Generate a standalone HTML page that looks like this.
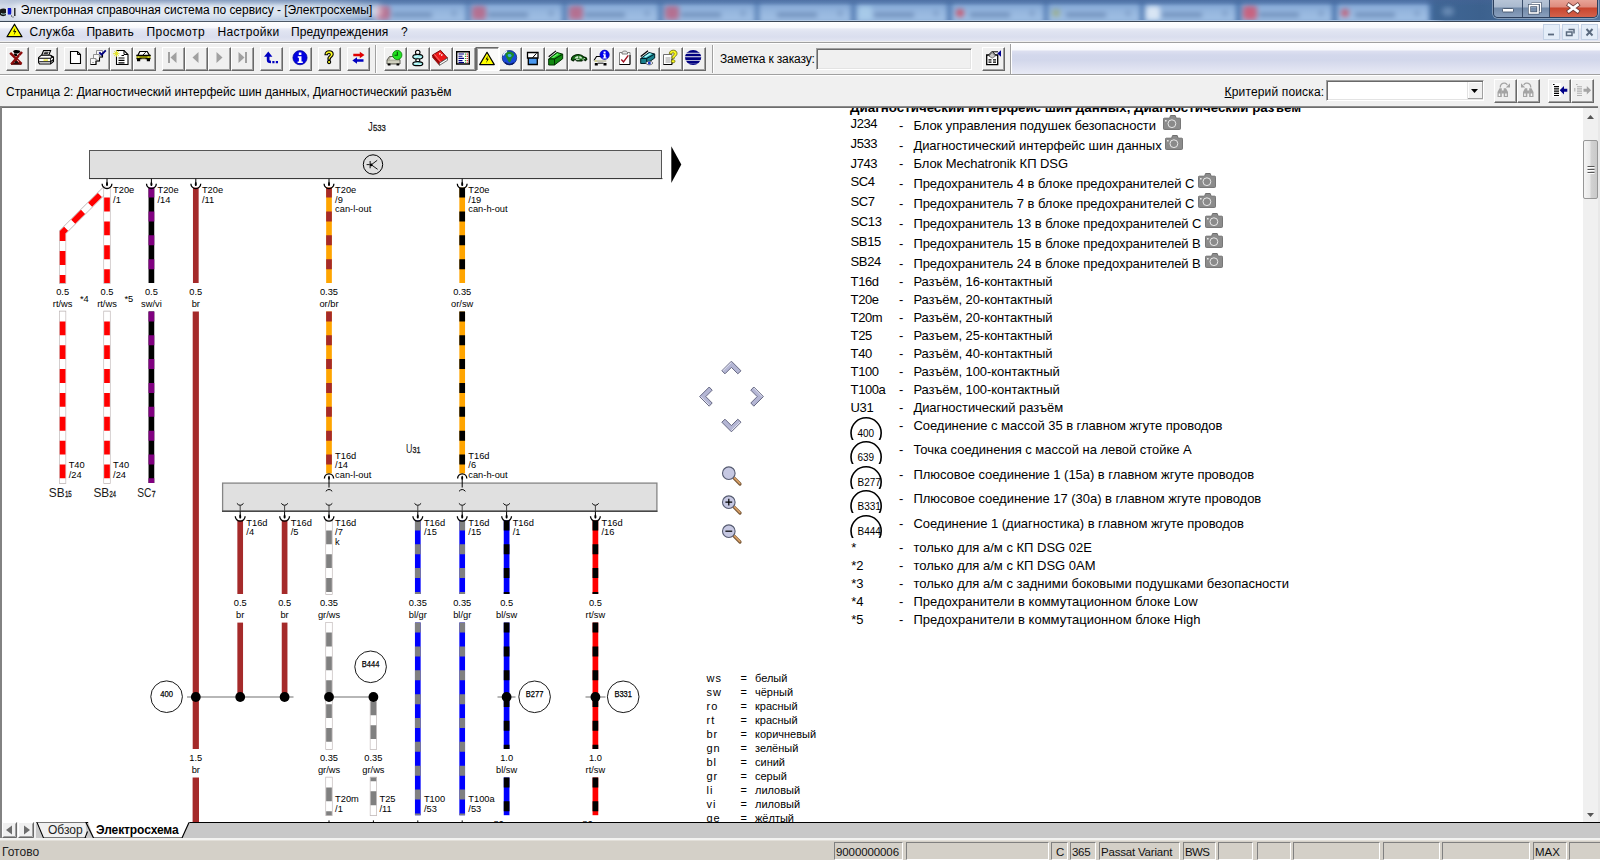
<!DOCTYPE html>
<html lang="ru"><head><meta charset="utf-8"><title>Электронная справочная система по сервису - [Электросхемы]</title>
<style>
html,body{margin:0;padding:0;}
body{width:1600px;height:860px;overflow:hidden;position:relative;background:#fff;font-family:"Liberation Sans",sans-serif;font-size:12px;color:#000;}
.a{position:absolute;}
.t{position:absolute;white-space:nowrap;line-height:1;}
#titlebar{left:0;top:0;width:1600px;height:21px;overflow:hidden;background:linear-gradient(to right,#d3dbe8 0,#cfd9e8 60px,#c4d2e6 150px,#b4c7e0 260px,#9ab4d6 330px,#5d84b9 372px,#4c76ae 1425px,#3f6695 1436px,#3c618e 1480px,#50759f 1600px);}
#menubar{left:0;top:22px;width:1600px;height:19px;background:linear-gradient(to bottom,#ffffff 0,#f7f8fc 5.5px,#e6e9f4 7px,#dfe3f1 10px,#dadeee 15px,#e2e5f2 19px);}
#toolrow{left:0;top:43px;width:1600px;height:31px;background:#f0f0f0;}
#toolgrad{left:1012px;top:43px;width:588px;height:31px;background:linear-gradient(to bottom,#ffffff 0,#f8f9fc 6.5px,#dcdff0 8.5px,#d3d8ec 12px,#d2d7eb 17px,#dde0f0 24px,#e8eaf5 31px);}
#infobar{left:0;top:76px;width:1600px;height:30px;background:#f0f0f0;}
.btn{position:absolute;width:23px;height:24px;box-sizing:border-box;background:#f0f0f0;border-top:1px solid #fff;border-left:1px solid #fff;border-right:1px solid #696969;border-bottom:1px solid #696969;box-shadow:inset -1px -1px 0 #a0a0a0;}
.btn.p{background:#fafafa;border-top:1px solid #696969;border-left:1px solid #696969;border-right:1px solid #fff;border-bottom:1px solid #fff;box-shadow:inset 1px 1px 0 #a0a0a0;}
.btn svg{position:absolute;left:2px;top:3px;}
.sunk{position:absolute;box-sizing:border-box;border-top:1px solid #a0a0a0;border-left:1px solid #a0a0a0;border-right:1px solid #fff;border-bottom:1px solid #fff;box-shadow:inset 1px 1px 0 #696969,inset -1px -1px 0 #e3e3e3;}
.sp{position:absolute;box-sizing:border-box;height:18px;top:842px;border-top:1px solid #808080;border-left:1px solid #808080;border-right:1px solid #fff;border-bottom:1px solid #fff;font-size:11.5px;line-height:18px;padding-left:1px;white-space:nowrap;overflow:hidden;color:#111;}
</style></head><body>
<!-- ===== title bar ===== -->
<div id="titlebar" class="a">
  <div id="tabsblur" class="a" style="left:0;top:0;width:1600px;height:21px;filter:blur(2.6px);">
<div class="a" style="left:374.0px;top:2.5px;width:91.8px;height:20px;background:linear-gradient(to bottom,#7fa3d2,#95b6de 40%,#a2c1e5);border-radius:3px 3px 0 0;"></div>
<div class="a" style="left:376.0px;top:5.5px;width:14px;height:14px;background:#b86484;border-radius:3px;opacity:.85;"></div>
<div class="a" style="left:392.0px;top:13px;width:40px;height:4px;background:rgba(70,100,150,.55);"></div>
<div class="a" style="left:452.3px;top:11px;width:4px;height:5px;background:rgba(60,90,140,.30);"></div>
<div class="a" style="left:470.3px;top:2.5px;width:91.8px;height:20px;background:linear-gradient(to bottom,#7fa3d2,#95b6de 40%,#a2c1e5);border-radius:3px 3px 0 0;"></div>
<div class="a" style="left:472.3px;top:5.5px;width:14px;height:14px;background:#b86484;border-radius:3px;opacity:.85;"></div>
<div class="a" style="left:488.3px;top:13px;width:40px;height:4px;background:rgba(70,100,150,.55);"></div>
<div class="a" style="left:548.6px;top:11px;width:4px;height:5px;background:rgba(60,90,140,.30);"></div>
<div class="a" style="left:566.6px;top:2.5px;width:91.8px;height:20px;background:linear-gradient(to bottom,#7fa3d2,#95b6de 40%,#a2c1e5);border-radius:3px 3px 0 0;"></div>
<div class="a" style="left:568.6px;top:5.5px;width:14px;height:14px;background:#b86484;border-radius:3px;opacity:.85;"></div>
<div class="a" style="left:584.6px;top:13px;width:40px;height:4px;background:rgba(70,100,150,.55);"></div>
<div class="a" style="left:644.9px;top:11px;width:4px;height:5px;background:rgba(60,90,140,.30);"></div>
<div class="a" style="left:662.9px;top:2.5px;width:91.8px;height:20px;background:linear-gradient(to bottom,#7fa3d2,#95b6de 40%,#a2c1e5);border-radius:3px 3px 0 0;"></div>
<div class="a" style="left:664.9px;top:5.5px;width:14px;height:14px;background:#b86484;border-radius:3px;opacity:.85;"></div>
<div class="a" style="left:680.9px;top:13px;width:40px;height:4px;background:rgba(70,100,150,.55);"></div>
<div class="a" style="left:741.2px;top:11px;width:4px;height:5px;background:rgba(60,90,140,.30);"></div>
<div class="a" style="left:759.2px;top:2.5px;width:91.8px;height:20px;background:linear-gradient(to bottom,#7fa3d2,#95b6de 40%,#a2c1e5);border-radius:3px 3px 0 0;"></div>
<div class="a" style="left:777.2px;top:13px;width:40px;height:4px;background:rgba(70,100,150,.55);"></div>
<div class="a" style="left:837.5px;top:11px;width:4px;height:5px;background:rgba(60,90,140,.30);"></div>
<div class="a" style="left:855.5px;top:2.5px;width:91.8px;height:20px;background:linear-gradient(to bottom,#7fa3d2,#95b6de 40%,#a2c1e5);border-radius:3px 3px 0 0;"></div>
<div class="a" style="left:857.5px;top:5.5px;width:14px;height:14px;background:#a9cdea;border-radius:3px;opacity:.85;"></div>
<div class="a" style="left:873.5px;top:13px;width:40px;height:4px;background:rgba(70,100,150,.55);"></div>
<div class="a" style="left:933.8px;top:11px;width:4px;height:5px;background:rgba(60,90,140,.30);"></div>
<div class="a" style="left:951.8px;top:2.5px;width:91.8px;height:20px;background:linear-gradient(to bottom,#7fa3d2,#95b6de 40%,#a2c1e5);border-radius:3px 3px 0 0;"></div>
<div class="a" style="left:955.8px;top:9.0px;width:8px;height:8px;background:#cf4d63;border-radius:3px;opacity:.85;"></div>
<div class="a" style="left:969.8px;top:13px;width:40px;height:4px;background:rgba(70,100,150,.55);"></div>
<div class="a" style="left:1030.1px;top:11px;width:4px;height:5px;background:rgba(60,90,140,.30);"></div>
<div class="a" style="left:1048.1px;top:2.5px;width:91.8px;height:20px;background:linear-gradient(to bottom,#7fa3d2,#95b6de 40%,#a2c1e5);border-radius:3px 3px 0 0;"></div>
<div class="a" style="left:1052.1px;top:9.0px;width:8px;height:8px;background:#9aae8c;border-radius:3px;opacity:.85;"></div>
<div class="a" style="left:1066.1px;top:13px;width:40px;height:4px;background:rgba(70,100,150,.55);"></div>
<div class="a" style="left:1126.4px;top:11px;width:4px;height:5px;background:rgba(60,90,140,.30);"></div>
<div class="a" style="left:1144.4px;top:2.5px;width:91.8px;height:20px;background:linear-gradient(to bottom,#7fa3d2,#95b6de 40%,#a2c1e5);border-radius:3px 3px 0 0;"></div>
<div class="a" style="left:1146.4px;top:5.5px;width:14px;height:14px;background:#e4edf8;border-radius:3px;opacity:.85;"></div>
<div class="a" style="left:1162.4px;top:13px;width:40px;height:4px;background:rgba(70,100,150,.55);"></div>
<div class="a" style="left:1222.7px;top:11px;width:4px;height:5px;background:rgba(60,90,140,.30);"></div>
<div class="a" style="left:1240.7px;top:2.5px;width:91.8px;height:20px;background:linear-gradient(to bottom,#7fa3d2,#95b6de 40%,#a2c1e5);border-radius:3px 3px 0 0;"></div>
<div class="a" style="left:1242.7px;top:5.5px;width:14px;height:14px;background:#cf5570;border-radius:3px;opacity:.85;"></div>
<div class="a" style="left:1258.7px;top:13px;width:40px;height:4px;background:rgba(70,100,150,.55);"></div>
<div class="a" style="left:1319.0px;top:11px;width:4px;height:5px;background:rgba(60,90,140,.30);"></div>
<div class="a" style="left:1337.0px;top:2.5px;width:91.8px;height:20px;background:linear-gradient(to bottom,#7fa3d2,#95b6de 40%,#a2c1e5);border-radius:3px 3px 0 0;"></div>
<div class="a" style="left:1341.0px;top:9.0px;width:8px;height:8px;background:#c65a72;border-radius:3px;opacity:.85;"></div>
<div class="a" style="left:1355.0px;top:13px;width:40px;height:4px;background:rgba(70,100,150,.55);"></div>
<div class="a" style="left:1415.3px;top:11px;width:4px;height:5px;background:rgba(60,90,140,.30);"></div>
<div class="a" style="left:1442px;top:7px;width:12px;height:9px;background:rgba(150,180,215,.45);border-radius:5px;"></div>
  </div>
  <div class="a" style="left:0;top:0;width:1600px;height:6px;background:linear-gradient(to bottom,rgba(70,100,150,.55),rgba(70,100,150,.35) 3px,rgba(70,100,150,0) 6px);-webkit-mask-image:linear-gradient(to right,rgba(0,0,0,.25) 0,rgba(0,0,0,.9) 90px,#000 400px);mask-image:linear-gradient(to right,rgba(0,0,0,.25) 0,rgba(0,0,0,.9) 90px,#000 400px);"></div>
</div>
<div class="a" style="left:0;top:20px;width:1600px;height:1px;background:linear-gradient(to right,#c9d3e0,#b9cde6 380px,#a9c2e0 1430px,#7f9cc0 1445px,#8aa5c6);"></div>
<div class="a" style="left:0;top:21px;width:1600px;height:1px;background:#3a4656;"></div>
<div class="a" style="left:14px;top:4px;width:368px;height:14px;border-radius:8px;background:rgba(255,255,255,.6);filter:blur(3.5px);"></div>
<div class="t" id="wtitle" style="left:20.8px;top:4px;font-size:12px;letter-spacing:-0.02px;">Электронная справочная система по сервису - [Электросхемы]</div>
<svg class="a" style="left:0;top:5px;" width="18" height="13" viewBox="0 0 18 13"><path d="M0 4.500c2-1.500 5-1.500 6.500 0v5.500c-2 1.500-5 1.500-6.500 0z" fill="#181818"/><path d="M1 8.500c1.500.8 3.500.8 5 0" stroke="#a8d8d8" stroke-width="1" fill="none"/><path d="M7.500 3h3.500c.8 1.800.8 4.500 0 6.500H7.500z" fill="#1018c8"/><path d="M6 3.500l1.500-1.500v8L6 11z" fill="#e8e8f0"/><path d="M11.500 2.500h1.500v8h-1.500z" fill="#d8d8e0"/><path d="M14.800 3v8" stroke="#101010" stroke-width="1.300"/><path d="M11 11h1M12.500 12h1" stroke="#202020"/></svg>
<div class="a" style="left:1493px;top:-1px;width:105px;height:19px;box-sizing:border-box;border:1px solid #2c3f5c;border-top:none;border-radius:0 0 5px 5px;overflow:hidden;box-shadow:0 0 0 1px rgba(255,255,255,.35);"><div class="a" style="left:0;top:0;width:28px;height:18px;background:linear-gradient(to bottom,#b9c6d8 0,#a9b9ce 8px,#7189a8 9px,#8aa0bd 18px);border-right:1px solid #3a4d6a;"></div><div class="a" style="left:29px;top:0;width:26px;height:18px;background:linear-gradient(to bottom,#b9c6d8 0,#a9b9ce 8px,#7189a8 9px,#8aa0bd 18px);border-right:1px solid #3a4d6a;"></div><div class="a" style="left:56px;top:0;width:48px;height:18px;background:linear-gradient(to bottom,#e9a89c 0,#de8a7c 8px,#c8452e 9px,#d4624c 18px);"></div></div>
<svg class="a" style="left:1493px;top:0;" width="105" height="18" viewBox="0 0 105 18"><rect x="9.500" y="8.500" width="11" height="3.500" rx=".8" fill="#fff" stroke="#43536b" stroke-width=".9"/><path d="M38.500 3.500h9v8h-2.200" fill="none" stroke="#43536b" stroke-width="2.600"/><path d="M38.500 3.500h9v8h-2.200" fill="none" stroke="#fff" stroke-width="1.300"/><rect x="36.500" y="5.500" width="8.500" height="7.500" fill="none" stroke="#43536b" stroke-width="3"/><rect x="36.500" y="5.500" width="8.500" height="7.500" fill="none" stroke="#fff" stroke-width="1.600"/><path d="M76 5l8.500 6.200M84.500 5L76 11.200" stroke="#6a3a38" stroke-width="4.300" stroke-linecap="square"/><path d="M76 5l8.500 6.200M84.500 5L76 11.200" stroke="#fff" stroke-width="2.700" stroke-linecap="square"/></svg>
<!-- ===== menu bar ===== -->
<div id="menubar" class="a"></div>
<div class="a" style="left:0;top:41px;width:1600px;height:1px;background:#f0f0f0;"></div>
<div class="a" style="left:0;top:42px;width:1600px;height:1px;background:#a0a0a0;"></div>
<div class="t m" style="left:29.6px;top:26px;letter-spacing:.33px;">Служба</div>
<div class="t m" style="left:86.4px;top:26px;letter-spacing:.1px;">Править</div>
<div class="t m" style="left:146.4px;top:26px;letter-spacing:.5px;">Просмотр</div>
<div class="t m" style="left:217.4px;top:26px;letter-spacing:.36px;">Настройки</div>
<div class="t m" style="left:291px;top:26px;letter-spacing:.1px;">Предупреждения</div>
<div class="t m" style="left:401px;top:26px;">?</div>
<svg class="a" style="left:6px;top:23px;" width="17" height="15" viewBox="0 0 17 15"><path d="M8.500 1.200L16 13.700H1z" fill="#ffff00" stroke="#000" stroke-width="1.200" stroke-linejoin="round"/><path d="M9.200 5L7 8.800h1.800L7.600 12.500l2.700-4.600H8.600z" fill="#000"/></svg>
<div class="a" style="left:1543px;top:24px;width:17px;height:16px;box-sizing:border-box;background:#e4edf8;border:1px solid #c3d1e4;"></div>
<div class="a" style="left:1562px;top:24px;width:17px;height:16px;box-sizing:border-box;background:#e4edf8;border:1px solid #c3d1e4;"></div>
<div class="a" style="left:1581px;top:24px;width:17px;height:16px;box-sizing:border-box;background:#e4edf8;border:1px solid #c3d1e4;"></div>
<svg class="a" style="left:1543px;top:24px;" width="56" height="16" viewBox="0 0 56 16"><path d="M5 10.500h6" stroke="#5a6a7e" stroke-width="1.800"/><path d="M25.500 5.500h5.500v4" fill="none" stroke="#5a6a7e" stroke-width="1.500"/><rect x="23.500" y="8" width="5.500" height="3.500" fill="none" stroke="#5a6a7e" stroke-width="1.500"/><path d="M43.500 5l6 6.500M49.500 5l-6 6.500" stroke="#5a6a7e" stroke-width="1.900"/></svg>
<!-- ===== toolbar ===== -->
<div id="toolrow" class="a"></div>
<div class="a" style="left:0;top:43px;width:1600px;height:1px;background:#fff;"></div>
<div id="toolgrad" class="a"></div>
<div class="a" style="left:1010px;top:44px;width:1px;height:30px;background:#a0a0a0;"></div>
<div class="a" style="left:1011px;top:44px;width:1px;height:30px;background:#fff;"></div>
<div class="a" style="left:0;top:74px;width:1600px;height:1px;background:#a0a0a0;"></div>
<div class="a" style="left:0;top:75px;width:1600px;height:1px;background:#fff;"></div>
<div class="a" style="left:375px;top:45px;width:1px;height:28px;background:#a0a0a0;"></div>
<div class="a" style="left:376px;top:45px;width:1px;height:28px;background:#fff;"></div>
<div class="a" style="left:712px;top:45px;width:1px;height:28px;background:#a0a0a0;"></div>
<div class="a" style="left:713px;top:45px;width:1px;height:28px;background:#fff;"></div>
<div class="btn" style="left:6px;top:47px;width:23px;height:24px;"><svg width="16" height="16" viewBox="0 0 16 16" style="left:2px;top:2px;overflow:visible;"><path d="M4 1.200c1-1.400 4.500-1.600 6.500-.600l1 1.400L9 3.500 5.500 3.200z" fill="#000"/><path d="M4.800 3.500h2.800l1 2.500H5.500z" fill="#000"/><path d="M7.500 9.500a2.300 2.300 0 1 0 .1 0z" fill="#111"/><path d="M2 13h10.500v1.800H2z" fill="#400000"/><path d="M1.200 2.800L12.500 14M13 2L2.200 14.300" stroke="#8c0c0c" stroke-width="2.500"/><path d="M8.300 10.300l1.500 1.300M10.800 5.500l.8 2" stroke="#fff" stroke-width=".9"/></svg></div>
<div class="btn" style="left:35px;top:47px;width:23px;height:24px;"><svg width="16" height="16" viewBox="0 0 16 16" style="left:2px;top:2px;overflow:visible;"><path d="M3.600 5.200L5.600.500h7L10.800 5.200z" fill="#fff" stroke="#000" stroke-width="1.100"/><path d="M6.300 2.200h4.200M5.700 3.700h4.200" stroke="#000" stroke-width="1"/><path d="M.600 7.700L3.300 5.200h9.200l3 1.800v4.500L12.500 14H1.600l-1-1.500z" fill="#fff" stroke="#000" stroke-width="1.100"/><path d="M.600 8.200h11.900l3-1.500M1.200 11.700h11.300l3-2.200" stroke="#000" fill="none" stroke-width="1.100"/><path d="M12.500 8.200V14" stroke="#000" stroke-width=".8"/><path d="M5.500 10.100h4.500" stroke="#e8e020" stroke-width="1.300"/><path d="M12.800 5.800l1.800 1.300" stroke="#000" stroke-width="1.200"/></svg></div>
<div class="btn" style="left:64px;top:47px;width:23px;height:24px;"><svg width="16" height="16" viewBox="0 0 16 16" style="left:2px;top:2px;overflow:visible;"><path d="M3.500 1.500h7l3 3v9h-10z" fill="#fff" stroke="#000" stroke-width="1.100"/><path d="M10.500 1.500v3h3" fill="none" stroke="#000" stroke-width="1"/></svg></div>
<div class="btn" style="left:87px;top:47px;width:23px;height:24px;"><svg width="16" height="16" viewBox="0 0 16 16" style="left:2px;top:2px;overflow:visible;"><path d="M6.500.500h6v6.500h-6z" fill="#f8f8f8" stroke="#909090"/><path d="M7 7h5.500V3" fill="none" stroke="#000" stroke-width="1.100"/><path d="M3.500 4.500h6v6.500h-6z" fill="#f8f8f8" stroke="#909090"/><path d="M4 11h5.500V7.500" fill="none" stroke="#000" stroke-width="1.100"/><path d="M.500 8.500h5.500v6H.500z" fill="#f8f8f8" stroke="#909090"/><path d="M.500 14.500h5.500V11" fill="none" stroke="#000" stroke-width="1.100"/><path d="M8.500 6h2.500M5.500 9.500h2M2 12.500h2" stroke="#a0a0a0" stroke-width=".8"/><path d="M9.300 2.300l2.300 2.300L15.800.400" fill="none" stroke="#000080" stroke-width="1.900"/></svg></div>
<div class="btn" style="left:110px;top:47px;width:23px;height:24px;"><svg width="16" height="16" viewBox="0 0 16 16" style="left:2px;top:2px;overflow:visible;"><path d="M3.500.500h7.500l4 4v10h-11.500z" fill="#fff" stroke="#000" stroke-width="1.100"/><path d="M11 .500v4h4" fill="none" stroke="#000" stroke-width="1"/><path d="M8.500 5.500h2.500M5.500 8h6M5.500 10.400h6M5.500 12.800h6" stroke="#000" stroke-width="1.200"/><path d="M0 3.700h6.500M3.500 .300v6.500M1.200 1.300l4.600 4.600M5.800 1.300L1.200 5.900" stroke="#e4e428" stroke-width="1"/></svg></div>
<div class="btn" style="left:133px;top:47px;width:23px;height:24px;"><svg width="16" height="16" viewBox="0 0 16 16" style="left:2px;top:2px;overflow:visible;"><path d="M1.800 5.500L3.800 1.500h7.400l2.300 4z" fill="#fff" stroke="#000" stroke-width="1.200"/><path d="M7 5l2.700-2.800" stroke="#000" stroke-width=".9"/><path d="M.500 5.300h14v3.500H.500z" fill="#848400"/><path d="M.300 5.400h14.400" stroke="#000" stroke-width="1.300"/><path d="M1.500 6.500h2v1.200h-2zM11.500 6.500h2v1.200h-2z" fill="#f0f040"/><path d="M.500 8.700h14" stroke="#000" stroke-width="1.200"/><path d="M1 8.500h3.200v2.700H1zM10.800 8.500H14v2.700h-3.200z" fill="#000"/><path d="M5.500 8.700h4v1h-4z" fill="#e8e8c0"/></svg></div>
<div class="btn" style="left:162px;top:47px;width:23px;height:24px;"><svg width="16" height="16" viewBox="0 0 16 16" style="left:2px;top:2px;overflow:visible;"><path d="M3 2v11h2V2z" fill="#a0a0a0"/><path d="M11.500 2v11L5.500 7.500z" fill="#a0a0a0"/></svg></div>
<div class="btn" style="left:185px;top:47px;width:23px;height:24px;"><svg width="16" height="16" viewBox="0 0 16 16" style="left:2px;top:2px;overflow:visible;"><path d="M10.500 2v11l-6-5.500z" fill="#a0a0a0"/></svg></div>
<div class="btn" style="left:208px;top:47px;width:23px;height:24px;"><svg width="16" height="16" viewBox="0 0 16 16" style="left:2px;top:2px;overflow:visible;"><path d="M5.500 2v11l6-5.500z" fill="#a0a0a0"/></svg></div>
<div class="btn" style="left:231px;top:47px;width:23px;height:24px;"><svg width="16" height="16" viewBox="0 0 16 16" style="left:2px;top:2px;overflow:visible;"><path d="M11 2v11h2V2z" fill="#a0a0a0"/><path d="M4.500 2v11l6-5.500z" fill="#a0a0a0"/></svg></div>
<div class="btn" style="left:260px;top:47px;width:23px;height:24px;"><svg width="16" height="16" viewBox="0 0 16 16" style="left:2px;top:2px;overflow:visible;"><path d="M5.300 1.500L1 6.800h2.800V10c0 2.200 1.200 3.300 4.200 3.300V10.700c-1.300 0-1.500-.400-1.500-1.200V6.800h2.900z" fill="#0000c0"/><path d="M9.300 11h2.200v2.300H9.300zM12.800 11H15v2.300h-2.200z" fill="#0000c0"/></svg></div>
<div class="btn" style="left:289px;top:47px;width:23px;height:24px;"><svg width="16" height="16" viewBox="0 0 16 16" style="left:2px;top:2px;overflow:visible;"><circle cx="8" cy="7.700" r="7.100" fill="#0000e0" stroke="#000090" stroke-width=".7"/><path d="M6.800 2.600h2.600v2.400H6.800zM5.800 6.200h3.700v5.200h1.300v1.500H5.600v-1.500h1.300V7.700H5.800z" fill="#fff"/></svg></div>
<div class="btn" style="left:318px;top:47px;width:23px;height:24px;"><svg width="16" height="16" viewBox="0 0 16 16" style="left:2px;top:2px;overflow:visible;"><path d="M4 4.800C4 2.300 5.700.700 8.200.700s4 1.500 4 3.500c0 1.700-1 2.400-1.900 3.100-.7.500-.9.900-.9 1.900H6.800c0-1.600.4-2.300 1.300-3 .8-.6 1.200-1 1.200-1.800 0-.7-.5-1.200-1.300-1.200-.9 0-1.400.600-1.400 1.600z" fill="#ffff20" stroke="#000" stroke-width="1.100"/><circle cx="8.100" cy="12" r="1.600" fill="#ffff20" stroke="#000" stroke-width="1.100"/></svg></div>
<div class="btn" style="left:347px;top:47px;width:23px;height:24px;"><svg width="16" height="16" viewBox="0 0 16 16" style="left:2px;top:2px;overflow:visible;"><path d="M3.300 3.800h6.500V1.700l4.700 3.300-4.700 3.300V6.200H3.300z" fill="#e00000"/><path d="M13.500 9.300H7V7.200L2.300 10.500 7 13.800v-2.100h6.500z" fill="#0000c0"/></svg></div>
<div class="btn" style="left:384px;top:47px;width:23px;height:24px;"><svg width="16" height="16" viewBox="0 0 16 16" style="left:2px;top:2px;overflow:visible;"><path d="M0 10L2.500 6.500h8l2.500 3.500v4H0z" fill="#b4b4a4" stroke="#505048" stroke-width=".9"/><path d="M2.800 9.500L4 7.300h5L10.300 9.500z" fill="#ececec"/><path d="M.600 11.300h11.800v1.500H.600z" fill="#d8d8c8"/><path d="M.800 13.600h2.700v2H.800zM9.500 13.600h2.700v2H9.500z" fill="#000"/><circle cx="10.300" cy="5" r="4.600" fill="#22e222" stroke="#0a8a0a" stroke-width=".9"/><path d="M10.300 1.800V5.200H7.500" stroke="#045004" stroke-width="1.100" fill="none"/></svg></div>
<div class="btn" style="left:407px;top:47px;width:23px;height:24px;"><svg width="16" height="16" viewBox="0 0 16 16" style="left:2px;top:2px;overflow:visible;"><path d="M5.500 2.300c0-2.800 4.500-2.800 4.500 0 0 1.800-.9 2.400-2.200 2.400S5.500 4.100 5.500 2.300z" fill="#fff" stroke="#000" stroke-width="1.100"/><path d="M2.800 6.800c0-1.800 2-2.400 5-2.400s5 .6 5 2.400-1.300 1.900-3 2.200H5.800C4.100 8.700 2.800 8.600 2.800 6.800z" fill="#98f0f0" stroke="#000" stroke-width="1.100"/><path d="M4.500 6.300h3M8.500 7.300h2.500" stroke="#fff" stroke-width=".8"/><path d="M5.800 10c0-1.700 4-1.700 4 0s-.8 2-2 2-2-.5-2-2z" fill="#fff" stroke="#000" stroke-width="1.100"/><path d="M2.800 13.800c0-1.700 2-2.200 5-2.200s5 .5 5 2.200-1.700 1.800-3 1.800H5.800c-1.700 0-3-.1-3-1.800z" fill="#98f0f0" stroke="#000" stroke-width="1.100"/><path d="M4.500 13.300h3M8.500 14.300h2.500" stroke="#fff" stroke-width=".8"/></svg></div>
<div class="btn" style="left:430px;top:47px;width:23px;height:24px;"><svg width="16" height="16" viewBox="0 0 16 16" style="left:2px;top:2px;overflow:visible;"><path d="M-.500 5L7.500 .300l7 7.700L6.500 13z" fill="#ec1818" stroke="#700000" stroke-width=".9"/><path d="M-.500 5l7 8v2.300L-.300 7.500z" fill="#b80000" stroke="#600000" stroke-width=".6"/><path d="M6.500 13l8-5v2.300l-8 5z" fill="#fff" stroke="#505050" stroke-width=".8"/><path d="M1.300 4.300l6.500 7.500" stroke="#ff9090" stroke-width=".7"/><path d="M6.500 4.500l.6-1.600M8.500 5.800l.6-1.600" stroke="#fff" stroke-width="1.200"/></svg></div>
<div class="btn" style="left:453px;top:47px;width:23px;height:24px;"><svg width="16" height="16" viewBox="0 0 16 16" style="left:2px;top:2px;overflow:visible;"><path d="M.700 1.700h12.600v12.300H.700z" fill="#fff" stroke="#000" stroke-width="1.400"/><path d="M2.500 4h5.500M2.500 6.200h4M2.500 8.400h5.500M2.500 10.600h4M2.500 12.500h5.500" stroke="#000080" stroke-width="1.100"/><path d="M9.500 3.500v9.500" stroke="#30b030" stroke-width="1.300" stroke-dasharray="1.200 1"/><path d="M11.300 3.500v9.500" stroke="#e03030" stroke-width="1.300" stroke-dasharray="1.200 1"/></svg></div>
<div class="btn p" style="left:476px;top:47px;width:23px;height:24px;"><svg width="16" height="16" viewBox="0 0 16 16" style="left:3px;top:3px;overflow:visible;"><path d="M7 1.300L14.300 13.600H-.300z" fill="#ffff00" stroke="#000" stroke-width="1.200" stroke-linejoin="round"/><path d="M7.700 4.700L5.600 8.600h1.700L6 12.300l2.800-4.600H7.200z" fill="#000"/></svg></div>
<div class="btn" style="left:499px;top:47px;width:23px;height:24px;"><svg width="16" height="16" viewBox="0 0 16 16" style="left:2px;top:2px;overflow:visible;"><circle cx="7.500" cy="7.700" r="7.200" fill="#1848d8" stroke="#102878" stroke-width=".8"/><path d="M4 2.500c2.500-2 6.500-1 8 1.500.5 2-1 3-2 4S9.500 11.500 7.500 12.500c-2-1-1.500-3-2.500-4S2.500 4.500 4 2.500z" fill="#1a8a2a"/><path d="M6 4.500c1-.8 3-.5 3.500.8S8 7.500 7 7 5.200 5.300 6 4.500z" fill="#38a8e8"/><path d="M1.200 5.500C1.700 3.500 3 2 5 1.200" stroke="#f0f6ff" stroke-width="1.500" fill="none"/><path d="M3 12.500c2 2.300 6.500 2.600 9 .2" stroke="#081860" stroke-width="1.400" fill="none"/></svg></div>
<div class="btn" style="left:522px;top:47px;width:23px;height:24px;"><svg width="16" height="16" viewBox="0 0 16 16" style="left:2px;top:2px;overflow:visible;"><path d="M2.500 2.500h10.500v5.700H2.500z" fill="#fff" stroke="#000" stroke-width="1.300"/><path d="M3.300 8.200h9v6.300h-9z" fill="#4a98f0" stroke="#000" stroke-width="1.300"/><path d="M7.500 7.800l4-4.500" stroke="#000" stroke-width="1"/></svg></div>
<div class="btn" style="left:545px;top:47px;width:23px;height:24px;"><svg width="16" height="16" viewBox="0 0 16 16" style="left:2px;top:2px;overflow:visible;"><path d="M.700 9L9 2.500l5.700 1.700v4.500L6.500 15H.700z" fill="#108810" stroke="#003000" stroke-width="1"/><path d="M.700 9H6.500l8.200-4.800M6.500 9v6" stroke="#003000" stroke-width="1" fill="none"/><path d="M2.800 8L9.300 3.300l3.300 1L6.300 8z" fill="#30d030"/><path d="M4.500 7.500l5.500-3.700" stroke="#80ff80" stroke-width="1"/><path d="M.700 6.800L8 .900" stroke="#000" stroke-width="1.200"/></svg></div>
<div class="btn" style="left:568px;top:47px;width:23px;height:24px;"><svg width="16" height="16" viewBox="0 0 16 16" style="left:2px;top:2px;overflow:visible;"><path d="M.300 9.800c0-2.700 2.500-5.300 7-5.300 2.500 0 4.300 1 5.300 2.400 2 .3 3.200 1 3.200 2.600l-1.500 1.200c-.5-1.400-3-1.400-3.500.2H6c-.5-1.700-3.300-1.700-3.800 0z" fill="#146c14" stroke="#002000" stroke-width="1.100"/><path d="M3.500 8.500c.5-1.400 2-2.400 3.800-2.400v2.400zM8.300 6.100c1.400 0 2.500.9 3.200 2.400H8.300z" fill="#d0ead0"/><path d="M5 9.600h3.500M11.500 9.600l2.500-1.200" stroke="#d0ead0" stroke-width=".9"/></svg></div>
<div class="btn" style="left:591px;top:47px;width:23px;height:24px;"><svg width="16" height="16" viewBox="0 0 16 16" style="left:2px;top:2px;overflow:visible;"><path d="M0 10.500L2.500 6.500h5" fill="none" stroke="#000" stroke-width="1.100"/><path d="M0 10.500h12.500v3H0z" fill="#f4f4f4"/><path d="M.300 10.300h12v1.500H.300z" fill="#b8b8a0"/><path d="M1 10.600h1.600v.9H1z" fill="#e8e860"/><path d="M.800 13h3v2.500h-3zM9.500 13h3v2.500h-3z" fill="#000"/><path d="M3.800 13.200h5.700" stroke="#000" stroke-width=".9"/><circle cx="10.600" cy="4.800" r="4.700" fill="#0000f0" stroke="#0000a0" stroke-width=".6"/><path d="M9.600 1.600h2v1.800h-2zM9 4.200h2.700v3.300h.9v1.100H8.800V7.500h1V5.300H9z" fill="#fff"/></svg></div>
<div class="btn" style="left:614px;top:47px;width:23px;height:24px;"><svg width="16" height="16" viewBox="0 0 16 16" style="left:2px;top:2px;overflow:visible;"><path d="M2.500 2.500h10.500v12H2.500z" fill="#fff" stroke="#808080" stroke-width="1"/><path d="M2.500 14.500h10.500V5" fill="none" stroke="#000" stroke-width="1"/><path d="M5 2.800c0-2.300 5.500-2.300 5.500 0v1.200H5z" fill="#e8e8e8" stroke="#707070" stroke-width=".9"/><path d="M4.300 9.500l2.200 2.300 4.800-6.500" fill="none" stroke="#a01020" stroke-width="1.400"/></svg></div>
<div class="btn" style="left:637px;top:47px;width:23px;height:24px;"><svg width="16" height="16" viewBox="0 0 16 16" style="left:2px;top:2px;overflow:visible;"><path d="M.700 8.500L9 2.500l5.700 1.500v4L7 13.500H.700z" fill="#18808c" stroke="#002028" stroke-width="1"/><path d="M.700 8.500H6.700L14.700 4M6.700 8.500v5" stroke="#002028" fill="none"/><path d="M2.800 7.600L9.300 3.200l3.300.9L6.300 7.600z" fill="#58d8e0"/><path d="M5 7l5.500-3.500" stroke="#c0ffff" stroke-width="1.100"/><path d="M.700 6.500L8 .700" stroke="#000" stroke-width="1.200"/><path d="M5.500 13c1.800-2.400 5.700-2.400 7.500 0-1.800 2.400-5.700 2.400-7.500 0z" fill="#fff" stroke="#283038" stroke-width=".7"/><circle cx="9.300" cy="13" r="1.500" fill="#1838c8"/></svg></div>
<div class="btn" style="left:660px;top:47px;width:23px;height:24px;"><svg width="16" height="16" viewBox="0 0 16 16" style="left:2px;top:2px;overflow:visible;"><path d="M.500 4.500h8.500v10h-8.500z" fill="#fff" stroke="#707070" stroke-width="1"/><path d="M.500 14.500h8.500V9" fill="none" stroke="#000" stroke-width="1"/><path d="M2.500 8h5M2.500 10h5M2.500 12h5" stroke="#909090" stroke-width=".9"/><path d="M6.300 3.700C6.300 1.500 8 .200 10.300.200S14 1.500 14 3.500c0 1.700-1 2.300-1.800 3-.6.500-.8.900-.8 1.800H8.800c0-1.500.5-2.100 1.300-2.800.7-.6 1.100-.9 1.100-1.700 0-.6-.4-1.100-1.100-1.100-.8 0-1.300.6-1.300 1.500z" fill="#f8f820" stroke="#606000" stroke-width=".8"/><path d="M8.300 11.300c0-2 3.700-2 3.700 0s-3.700 2-3.700 0z" fill="#f8f820" stroke="#606000" stroke-width=".8"/></svg></div>
<div class="btn" style="left:683px;top:47px;width:23px;height:24px;"><svg width="16" height="16" viewBox="0 0 16 16" style="left:2px;top:2px;overflow:visible;"><clipPath id="sgc"><ellipse cx="7.100" cy="7.500" rx="8.100" ry="7.600"/></clipPath><g clip-path="url(#sgc)"><path d="M-1 1.300h17M-1 5h17M-1 8.600h17M-1 12.200h17M-1 15h17" stroke="#000080" stroke-width="2.700"/></g></svg></div>
<div class="btn" style="left:982px;top:47px;width:23px;height:24px;"><svg width="16" height="16" viewBox="0 0 16 16" style="left:2px;top:2px;overflow:visible;"><path d="M1.700 5h11v9.700h-11z" fill="#fff" stroke="#000" stroke-width="1.300"/><path d="M3.500 9.800h3M8 9.800h3M3.500 12.200h3M8 12.200h3" stroke="#000" stroke-width="1.200"/><path d="M3.300 5.300L7.200 1.300l3.600 4" fill="#e8e8e8" stroke="#000" stroke-width="1"/><path d="M7.200 2.500l3.300 3.600-3.300 2-3.300-2z" fill="#c8c8c8" stroke="#303030" stroke-width=".6"/><path d="M8 1.800h5" stroke="#000" stroke-width="1"/><path d="M16 .300v6.400L12.300 3.500z" fill="#000090"/></svg></div>
<div class="t" style="left:720px;top:53px;font-size:12px;letter-spacing:-0.13px;">Заметка к заказу:</div>
<div class="sunk" style="left:816px;top:48px;width:156px;height:22px;background:#f0f0f0;"></div>
<!-- ===== info bar ===== -->
<div id="infobar" class="a"></div>
<div class="t" id="pagetitle" style="left:6px;top:86px;font-size:12px;letter-spacing:-0.03px;">Страница 2: Диагностический интерфейс шин данных, Диагностический разъём</div>
<div class="t" id="crit" style="left:1224.6px;top:86px;font-size:12px;letter-spacing:.15px;"><span style="text-decoration:underline;">К</span>ритерий поиска:</div>
<div class="sunk" style="left:1326px;top:80px;width:158px;height:21px;background:#fff;"></div>
<div class="a" style="left:1467px;top:82px;width:15px;height:17px;background:#f0f0f0;border-left:1px solid #e3e3e3;box-shadow:inset -1px -1px 0 #a0a0a0,inset 1px 1px 0 #fff;"></div>
<svg class="a" style="left:1470px;top:88px;" width="9" height="6" viewBox="0 0 9 6"><path d="M1 1h7l-3.5 4z" fill="#000"/></svg>
<div class="btn" style="left:1494px;top:79px;width:23px;height:24px;"><svg width="16" height="16" viewBox="0 0 16 16" style="left:2px;top:2px;overflow:visible;"><path d="M.500 15V10L2.500 6.300h2.300V15zM6.700 6.300H9L11 10v5H6.700z" fill="#a4a4a4"/><path d="M4.500 8.500h2.500v3H4.500z" fill="#a4a4a4"/><path d="M1.700 11.500h1.500v2.500H1.700zM8.200 11.500h1.500v2.500H8.200z" fill="#f8f8f8"/><path d="M3.300 5.500C3 2.500 5.500.500 8 1.200c1 .3 1.800 1 2.300 1.800" fill="none" stroke="#a4a4a4" stroke-width="1.300"/><path d="M13 1.200v4.300H8.800z" fill="#a4a4a4"/></svg></div>
<div class="btn" style="left:1517px;top:79px;width:23px;height:24px;"><svg width="16" height="16" viewBox="0 0 16 16" style="left:2px;top:2px;overflow:visible;"><g transform="translate(2.500 0)"><path d="M.500 15V10L2.500 6.300h2.300V15zM6.700 6.300H9L11 10v5H6.700z" fill="#a4a4a4"/><path d="M4.500 8.500h2.500v3H4.500z" fill="#a4a4a4"/><path d="M1.700 11.500h1.500v2.500H1.700zM8.200 11.500h1.500v2.500H8.200z" fill="#f8f8f8"/></g><path d="M10.700 5.500C11 2.500 8.500.500 6 1.200c-1 .3-1.800 1-2.300 1.800" fill="none" stroke="#a4a4a4" stroke-width="1.300"/><path d="M1 1.200v4.300h4.200z" fill="#a4a4a4"/></svg></div>
<div class="btn" style="left:1548px;top:79px;width:23px;height:24px;"><svg width="16" height="16" viewBox="0 0 16 16" style="left:2px;top:2px;overflow:visible;"><rect x="1.200" y="1" width="9" height="14" fill="#fff"/><path d="M2 2.500h1.600M3 4.700h5M3 6.900h5M3 9.100h5M3 11.300h5M3 13.500h5" stroke="#000" stroke-width="1.200"/><path d="M16.300 6.800h-3.300V4L8.700 8.200l4.300 4.200V9.800h3.300z" fill="#000088"/></svg></div>
<div class="btn" style="left:1571px;top:79px;width:23px;height:24px;"><svg width="16" height="16" viewBox="0 0 16 16" style="left:2px;top:2px;overflow:visible;"><path d="M2 2.500h1.600M3 4.700h5M3 6.900h5M3 9.100h5M3 11.300h5M3 13.500h5M.800 6v3.500" stroke="#b0b0b0" stroke-width="1.100"/><path d="M9.500 6.800h3.300V4l4.300 4.200-4.300 4.200V9.800H9.500z" fill="#a4a4a4"/></svg></div>
<!-- ===== main area frame ===== -->
<div class="a" style="left:0;top:106px;width:1600px;height:2px;background:#6d6d6d;"></div>
<div class="a" style="left:0;top:106px;width:1600px;height:1px;background:#8a8a8a;"></div>
<div class="a" style="left:0;top:106px;width:2px;height:716px;background:#828282;"></div>
<div class="a" style="left:2px;top:108px;width:1596px;height:714px;background:#fff;"></div>
<div class="a" style="left:1598px;top:106px;width:2px;height:716px;background:#e8e8e8;"></div>
<!-- ===== wiring diagram ===== -->
<svg class="a" id="diag" style="left:2px;top:108px;" width="843" height="714" viewBox="2 108 843 714" font-family="Liberation Sans,sans-serif" fill="#000" shape-rendering="auto">
<path d="M107.00 188.00 L62.60 232.20 L62.60 283.70" stroke="#b9b0b0" stroke-width="7.10" fill="none"/>
<path d="M107.00 188.00 L62.60 232.20 L62.60 283.00" stroke="#fff" stroke-width="5.90" fill="none"/>
<path d="M107.00 188.00 L62.60 232.20 L62.60 283.00" stroke="#ff0000" stroke-width="5.70" fill="none" stroke-dasharray="13.85 10.00" stroke-dashoffset="-10.00"/>
<path d="M107.00 186.90 L107.00 283.70" stroke="#b9b0b0" stroke-width="7.10" fill="none"/>
<path d="M107.00 187.60 L107.00 283.00" stroke="#fff" stroke-width="5.90" fill="none"/>
<path d="M107.00 187.60 L107.00 283.00" stroke="#ff0000" stroke-width="5.70" fill="none" stroke-dasharray="13.85 10.00" stroke-dashoffset="-10.00"/>
<path d="M151.40 187.60 L151.40 283.00" stroke="#000000" stroke-width="5.70" fill="none"/>
<path d="M151.40 187.60 L151.40 283.00" stroke="#800080" stroke-width="5.70" fill="none" stroke-dasharray="10.00 13.85"/>
<path d="M195.80 187.60 L195.80 283.00" stroke="#a52a2a" stroke-width="5.70" fill="none"/>
<path d="M329.00 187.60 L329.00 283.00" stroke="#ffa500" stroke-width="5.70" fill="none"/>
<path d="M329.00 187.60 L329.00 283.00" stroke="#a52a2a" stroke-width="5.70" fill="none" stroke-dasharray="10.00 13.85"/>
<path d="M462.20 187.60 L462.20 283.00" stroke="#ffa500" stroke-width="5.70" fill="none"/>
<path d="M462.20 187.60 L462.20 283.00" stroke="#000000" stroke-width="5.70" fill="none" stroke-dasharray="10.00 13.85"/>
<path d="M62.60 310.70 L62.60 483.70" stroke="#b9b0b0" stroke-width="7.10" fill="none"/>
<path d="M62.60 311.40 L62.60 483.00" stroke="#fff" stroke-width="5.90" fill="none"/>
<path d="M62.60 311.40 L62.60 483.00" stroke="#ff0000" stroke-width="5.70" fill="none" stroke-dasharray="13.85 10.00" stroke-dashoffset="-10.00"/>
<path d="M107.00 310.70 L107.00 483.70" stroke="#b9b0b0" stroke-width="7.10" fill="none"/>
<path d="M107.00 311.40 L107.00 483.00" stroke="#fff" stroke-width="5.90" fill="none"/>
<path d="M107.00 311.40 L107.00 483.00" stroke="#ff0000" stroke-width="5.70" fill="none" stroke-dasharray="13.85 10.00" stroke-dashoffset="-10.00"/>
<path d="M151.40 311.40 L151.40 483.00" stroke="#000000" stroke-width="5.70" fill="none"/>
<path d="M151.40 311.40 L151.40 483.00" stroke="#800080" stroke-width="5.70" fill="none" stroke-dasharray="10.00 13.85"/>
<path d="M195.80 311.40 L195.80 749.00" stroke="#a52a2a" stroke-width="6.20" fill="none"/>
<path d="M329.00 311.40 L329.00 473.60" stroke="#ffa500" stroke-width="5.70" fill="none"/>
<path d="M329.00 311.40 L329.00 473.60" stroke="#a52a2a" stroke-width="5.70" fill="none" stroke-dasharray="10.00 13.85"/>
<path d="M462.20 311.40 L462.20 473.60" stroke="#ffa500" stroke-width="5.70" fill="none"/>
<path d="M462.20 311.40 L462.20 473.60" stroke="#000000" stroke-width="5.70" fill="none" stroke-dasharray="10.00 13.85"/>
<path d="M195.80 777.50 L195.80 823.00" stroke="#a52a2a" stroke-width="6.40" fill="none"/>
<path d="M240.20 520.40 L240.20 594.00" stroke="#a52a2a" stroke-width="5.70" fill="none"/>
<path d="M284.60 520.40 L284.60 594.00" stroke="#a52a2a" stroke-width="5.70" fill="none"/>
<path d="M329.00 519.70 L329.00 594.70" stroke="#b9b0b0" stroke-width="7.10" fill="none"/>
<path d="M329.00 520.40 L329.00 594.00" stroke="#fff" stroke-width="5.90" fill="none"/>
<path d="M329.00 520.40 L329.00 594.00" stroke="#808080" stroke-width="5.70" fill="none" stroke-dasharray="13.85 10.00" stroke-dashoffset="-10.00"/>
<path d="M417.80 520.40 L417.80 594.00" stroke="#0000ff" stroke-width="5.70" fill="none"/>
<path d="M417.80 520.40 L417.80 594.00" stroke="#808080" stroke-width="5.70" fill="none" stroke-dasharray="10.00 13.85"/>
<path d="M462.20 520.40 L462.20 594.00" stroke="#0000ff" stroke-width="5.70" fill="none"/>
<path d="M462.20 520.40 L462.20 594.00" stroke="#808080" stroke-width="5.70" fill="none" stroke-dasharray="10.00 13.85"/>
<path d="M506.60 520.40 L506.60 594.00" stroke="#0000ff" stroke-width="5.70" fill="none"/>
<path d="M506.60 520.40 L506.60 594.00" stroke="#000000" stroke-width="5.70" fill="none" stroke-dasharray="10.00 13.85"/>
<path d="M595.40 520.40 L595.40 594.00" stroke="#ff0000" stroke-width="5.70" fill="none"/>
<path d="M595.40 520.40 L595.40 594.00" stroke="#000000" stroke-width="5.70" fill="none" stroke-dasharray="10.00 13.85"/>
<path d="M240.20 622.60 L240.20 697.00" stroke="#a52a2a" stroke-width="5.70" fill="none"/>
<path d="M284.60 622.60 L284.60 697.00" stroke="#a52a2a" stroke-width="5.70" fill="none"/>
<path d="M329.00 621.90 L329.00 749.70" stroke="#b9b0b0" stroke-width="7.10" fill="none"/>
<path d="M329.00 622.60 L329.00 749.00" stroke="#fff" stroke-width="5.90" fill="none"/>
<path d="M329.00 622.60 L329.00 749.00" stroke="#808080" stroke-width="5.70" fill="none" stroke-dasharray="13.85 10.00" stroke-dashoffset="-10.00"/>
<path d="M373.40 749.70 L373.40 696.30" stroke="#b9b0b0" stroke-width="7.10" fill="none"/>
<path d="M373.40 749.00 L373.40 697.00" stroke="#fff" stroke-width="5.90" fill="none"/>
<path d="M373.40 749.00 L373.40 697.00" stroke="#808080" stroke-width="5.70" fill="none" stroke-dasharray="13.85 10.00" stroke-dashoffset="-10.00"/>
<path d="M417.80 622.60 L417.80 815.20" stroke="#0000ff" stroke-width="5.70" fill="none"/>
<path d="M417.80 622.60 L417.80 815.20" stroke="#808080" stroke-width="5.70" fill="none" stroke-dasharray="10.00 13.85"/>
<path d="M462.20 622.60 L462.20 815.20" stroke="#0000ff" stroke-width="5.70" fill="none"/>
<path d="M462.20 622.60 L462.20 815.20" stroke="#808080" stroke-width="5.70" fill="none" stroke-dasharray="10.00 13.85"/>
<path d="M506.60 622.60 L506.60 697.00" stroke="#0000ff" stroke-width="5.70" fill="none"/>
<path d="M506.60 622.60 L506.60 697.00" stroke="#000000" stroke-width="5.70" fill="none" stroke-dasharray="10.00 13.85"/>
<path d="M506.60 697.00 L506.60 749.00" stroke="#0000ff" stroke-width="5.70" fill="none"/>
<path d="M506.60 697.00 L506.60 749.00" stroke="#000000" stroke-width="5.70" fill="none" stroke-dasharray="10.00 13.85"/>
<path d="M595.40 622.60 L595.40 697.00" stroke="#ff0000" stroke-width="5.70" fill="none"/>
<path d="M595.40 622.60 L595.40 697.00" stroke="#000000" stroke-width="5.70" fill="none" stroke-dasharray="10.00 13.85"/>
<path d="M595.40 697.00 L595.40 749.00" stroke="#ff0000" stroke-width="5.70" fill="none"/>
<path d="M595.40 697.00 L595.40 749.00" stroke="#000000" stroke-width="5.70" fill="none" stroke-dasharray="10.00 13.85"/>
<path d="M329.00 776.80 L329.00 815.90" stroke="#b9b0b0" stroke-width="7.10" fill="none"/>
<path d="M329.00 777.50 L329.00 815.20" stroke="#fff" stroke-width="5.90" fill="none"/>
<path d="M329.00 777.50 L329.00 815.20" stroke="#808080" stroke-width="5.70" fill="none" stroke-dasharray="13.85 10.00" stroke-dashoffset="-10.00"/>
<path d="M373.40 815.90 L373.40 776.80" stroke="#b9b0b0" stroke-width="7.10" fill="none"/>
<path d="M373.40 815.20 L373.40 777.50" stroke="#fff" stroke-width="5.90" fill="none"/>
<path d="M373.40 815.20 L373.40 777.50" stroke="#808080" stroke-width="5.70" fill="none" stroke-dasharray="13.85 10.00" stroke-dashoffset="-10.00"/>
<path d="M506.60 777.50 L506.60 815.20" stroke="#0000ff" stroke-width="5.70" fill="none"/>
<path d="M506.60 777.50 L506.60 815.20" stroke="#000000" stroke-width="5.70" fill="none" stroke-dasharray="10.00 13.85"/>
<path d="M595.40 777.50 L595.40 815.20" stroke="#ff0000" stroke-width="5.70" fill="none"/>
<path d="M595.40 777.50 L595.40 815.20" stroke="#000000" stroke-width="5.70" fill="none" stroke-dasharray="10.00 13.85"/>
<rect x="89.5" y="150.5" width="572" height="28" fill="#e0e0e0" stroke="#555" stroke-width="1"/>
<path d="M89 178.6h573.5" stroke="#333" stroke-width="0.9"/>
<rect x="222.6" y="483.1" width="434.3" height="28" fill="#e0e0e0" stroke="#858585" stroke-width="1.3"/>
<path d="M222 511.2h435.5" stroke="#111" stroke-width="0.9"/>
<path d="M671.3 146.3L681.3 164.5L671.3 183z" fill="#000"/>
<circle cx="373" cy="164.5" r="9.7" fill="none" stroke="#000" stroke-width="1"/>
<path d="M366.6 164.6H371.6 M371.2 164.9L377.2 160.3 M371.2 164.7L377.6 169.3" stroke="#000" stroke-width="0.9" fill="none"/>
<path d="M370.2 160.9V168.2" stroke="#555" stroke-width="1.5" fill="none"/>
<circle cx="371.2" cy="164.9" r="1.3" fill="#000"/>
<path d="M107.00 178.80 v4.5" stroke="#000" stroke-width="1" fill="none"/>
<path d="M107.00 181.40 c-1.3 1.6 -1.4 4.4 0 4.6 c1.4 -0.2 1.3 -3 0 -4.6z" fill="#000"/>
<path d="M102.10 183.70 a4.9 4.9 0 0 0 9.8 0" stroke="#000" stroke-width="1.3" fill="none"/>
<path d="M151.40 178.80 v4.5" stroke="#000" stroke-width="1" fill="none"/>
<path d="M151.40 181.40 c-1.3 1.6 -1.4 4.4 0 4.6 c1.4 -0.2 1.3 -3 0 -4.6z" fill="#000"/>
<path d="M146.50 183.70 a4.9 4.9 0 0 0 9.8 0" stroke="#000" stroke-width="1.3" fill="none"/>
<path d="M195.80 178.80 v4.5" stroke="#000" stroke-width="1" fill="none"/>
<path d="M195.80 181.40 c-1.3 1.6 -1.4 4.4 0 4.6 c1.4 -0.2 1.3 -3 0 -4.6z" fill="#000"/>
<path d="M190.90 183.70 a4.9 4.9 0 0 0 9.8 0" stroke="#000" stroke-width="1.3" fill="none"/>
<path d="M329.00 178.80 v4.5" stroke="#000" stroke-width="1" fill="none"/>
<path d="M329.00 181.40 c-1.3 1.6 -1.4 4.4 0 4.6 c1.4 -0.2 1.3 -3 0 -4.6z" fill="#000"/>
<path d="M324.10 183.70 a4.9 4.9 0 0 0 9.8 0" stroke="#000" stroke-width="1.3" fill="none"/>
<path d="M462.20 178.80 v4.5" stroke="#000" stroke-width="1" fill="none"/>
<path d="M462.20 181.40 c-1.3 1.6 -1.4 4.4 0 4.6 c1.4 -0.2 1.3 -3 0 -4.6z" fill="#000"/>
<path d="M457.30 183.70 a4.9 4.9 0 0 0 9.8 0" stroke="#000" stroke-width="1.3" fill="none"/>
<path d="M324.40 478.40 a4.6 4.6 0 0 1 9.2 0" stroke="#000" stroke-width="1.35" fill="none"/>
<path d="M329.00 477.50 v10" stroke="#000" stroke-width="1" fill="none"/>
<path d="M329.00 475.60 c-1.3 1.2 -1.3 3.6 0 4.4 c1.3 -0.8 1.3 -3.2 0 -4.4z" fill="#000"/>
<path d="M325.80 491.30 q3.2 -3.6 6.4 0" stroke="#000" stroke-width="1" fill="none"/>
<path d="M457.60 478.40 a4.6 4.6 0 0 1 9.2 0" stroke="#000" stroke-width="1.35" fill="none"/>
<path d="M462.20 477.50 v10" stroke="#000" stroke-width="1" fill="none"/>
<path d="M462.20 475.60 c-1.3 1.2 -1.3 3.6 0 4.4 c1.3 -0.8 1.3 -3.2 0 -4.4z" fill="#000"/>
<path d="M459.00 491.30 q3.2 -3.6 6.4 0" stroke="#000" stroke-width="1" fill="none"/>
<path d="M236.90 503.40 q3.3 3.8 6.6 0" stroke="#000" stroke-width="1" fill="none"/>
<path d="M240.20 505.40 v5.6" stroke="#444" stroke-width="1" fill="none"/>
<path d="M240.20 511.40 v4.5" stroke="#000" stroke-width="1" fill="none"/>
<path d="M240.20 514.00 c-1.3 1.6 -1.4 4.4 0 4.6 c1.4 -0.2 1.3 -3 0 -4.6z" fill="#000"/>
<path d="M235.30 516.30 a4.9 4.9 0 0 0 9.8 0" stroke="#000" stroke-width="1.3" fill="none"/>
<path d="M281.30 503.40 q3.3 3.8 6.6 0" stroke="#000" stroke-width="1" fill="none"/>
<path d="M284.60 505.40 v5.6" stroke="#444" stroke-width="1" fill="none"/>
<path d="M284.60 511.40 v4.5" stroke="#000" stroke-width="1" fill="none"/>
<path d="M284.60 514.00 c-1.3 1.6 -1.4 4.4 0 4.6 c1.4 -0.2 1.3 -3 0 -4.6z" fill="#000"/>
<path d="M279.70 516.30 a4.9 4.9 0 0 0 9.8 0" stroke="#000" stroke-width="1.3" fill="none"/>
<path d="M325.70 503.40 q3.3 3.8 6.6 0" stroke="#000" stroke-width="1" fill="none"/>
<path d="M329.00 505.40 v5.6" stroke="#444" stroke-width="1" fill="none"/>
<path d="M329.00 511.40 v4.5" stroke="#000" stroke-width="1" fill="none"/>
<path d="M329.00 514.00 c-1.3 1.6 -1.4 4.4 0 4.6 c1.4 -0.2 1.3 -3 0 -4.6z" fill="#000"/>
<path d="M324.10 516.30 a4.9 4.9 0 0 0 9.8 0" stroke="#000" stroke-width="1.3" fill="none"/>
<path d="M414.50 503.40 q3.3 3.8 6.6 0" stroke="#000" stroke-width="1" fill="none"/>
<path d="M417.80 505.40 v5.6" stroke="#444" stroke-width="1" fill="none"/>
<path d="M417.80 511.40 v4.5" stroke="#000" stroke-width="1" fill="none"/>
<path d="M417.80 514.00 c-1.3 1.6 -1.4 4.4 0 4.6 c1.4 -0.2 1.3 -3 0 -4.6z" fill="#000"/>
<path d="M412.90 516.30 a4.9 4.9 0 0 0 9.8 0" stroke="#000" stroke-width="1.3" fill="none"/>
<path d="M458.90 503.40 q3.3 3.8 6.6 0" stroke="#000" stroke-width="1" fill="none"/>
<path d="M462.20 505.40 v5.6" stroke="#444" stroke-width="1" fill="none"/>
<path d="M462.20 511.40 v4.5" stroke="#000" stroke-width="1" fill="none"/>
<path d="M462.20 514.00 c-1.3 1.6 -1.4 4.4 0 4.6 c1.4 -0.2 1.3 -3 0 -4.6z" fill="#000"/>
<path d="M457.30 516.30 a4.9 4.9 0 0 0 9.8 0" stroke="#000" stroke-width="1.3" fill="none"/>
<path d="M503.30 503.40 q3.3 3.8 6.6 0" stroke="#000" stroke-width="1" fill="none"/>
<path d="M506.60 505.40 v5.6" stroke="#444" stroke-width="1" fill="none"/>
<path d="M506.60 511.40 v4.5" stroke="#000" stroke-width="1" fill="none"/>
<path d="M506.60 514.00 c-1.3 1.6 -1.4 4.4 0 4.6 c1.4 -0.2 1.3 -3 0 -4.6z" fill="#000"/>
<path d="M501.70 516.30 a4.9 4.9 0 0 0 9.8 0" stroke="#000" stroke-width="1.3" fill="none"/>
<path d="M592.10 503.40 q3.3 3.8 6.6 0" stroke="#000" stroke-width="1" fill="none"/>
<path d="M595.40 505.40 v5.6" stroke="#444" stroke-width="1" fill="none"/>
<path d="M595.40 511.40 v4.5" stroke="#000" stroke-width="1" fill="none"/>
<path d="M595.40 514.00 c-1.3 1.6 -1.4 4.4 0 4.6 c1.4 -0.2 1.3 -3 0 -4.6z" fill="#000"/>
<path d="M590.50 516.30 a4.9 4.9 0 0 0 9.8 0" stroke="#000" stroke-width="1.3" fill="none"/>
<path d="M187 697H293.5 M329 697H373.5 M497.5 697H515.5 M585.5 697H605.5" stroke="#a0a0a0" stroke-width="1.3"/>
<circle cx="195.80" cy="697" r="4.9" fill="#000"/>
<circle cx="240.20" cy="697" r="4.9" fill="#000"/>
<circle cx="284.60" cy="697" r="4.9" fill="#000"/>
<circle cx="329.00" cy="697" r="4.9" fill="#000"/>
<circle cx="373.40" cy="697" r="4.9" fill="#000"/>
<circle cx="506.60" cy="697" r="4.9" fill="#000"/>
<circle cx="595.40" cy="697" r="4.9" fill="#000"/>
<circle cx="166.60" cy="696.70" r="15.8" fill="#fff" stroke="#000" stroke-width="0.9"/>
<text x="166.60" y="697.00" font-size="9.3" text-anchor="middle" textLength="12.7" lengthAdjust="spacingAndGlyphs" stroke="#000" stroke-width="0.25">400</text>
<circle cx="370.60" cy="666.80" r="15.8" fill="#fff" stroke="#000" stroke-width="0.9"/>
<text x="370.60" y="667.10" font-size="9.3" text-anchor="middle" textLength="17.6" lengthAdjust="spacingAndGlyphs" stroke="#000" stroke-width="0.25">B444</text>
<circle cx="534.60" cy="696.80" r="15.8" fill="#fff" stroke="#000" stroke-width="0.9"/>
<text x="534.60" y="697.10" font-size="9.3" text-anchor="middle" textLength="17.6" lengthAdjust="spacingAndGlyphs" stroke="#000" stroke-width="0.25">B277</text>
<circle cx="623.20" cy="696.80" r="15.8" fill="#fff" stroke="#000" stroke-width="0.9"/>
<text x="623.20" y="697.10" font-size="9.3" text-anchor="middle" textLength="17.6" lengthAdjust="spacingAndGlyphs" stroke="#000" stroke-width="0.25">B331</text>
<text x="367.90" y="130.90" font-size="13" fill="#1a1a1a" textLength="4.8" lengthAdjust="spacingAndGlyphs">J</text>
<text x="373.00" y="130.90" font-size="9" fill="#1a1a1a" stroke="#1a1a1a" stroke-width="0.3" textLength="12.8" lengthAdjust="spacingAndGlyphs">533</text>
<text x="405.90" y="452.90" font-size="12.6" fill="#1a1a1a" textLength="6.4" lengthAdjust="spacingAndGlyphs">U</text>
<text x="412.60" y="452.90" font-size="8.6" fill="#1a1a1a" stroke="#1a1a1a" stroke-width="0.3" textLength="8.0" lengthAdjust="spacingAndGlyphs">31</text>
<text x="48.80" y="496.90" font-size="13" fill="#1a1a1a" textLength="15.8" lengthAdjust="spacingAndGlyphs">SB</text>
<text x="64.90" y="496.90" font-size="8.2" fill="#1a1a1a" stroke="#1a1a1a" stroke-width="0.3" textLength="6.8" lengthAdjust="spacingAndGlyphs">15</text>
<text x="93.40" y="496.90" font-size="13" fill="#1a1a1a" textLength="15.8" lengthAdjust="spacingAndGlyphs">SB</text>
<text x="109.50" y="496.90" font-size="8.2" fill="#1a1a1a" stroke="#1a1a1a" stroke-width="0.3" textLength="6.4" lengthAdjust="spacingAndGlyphs">24</text>
<text x="137.20" y="496.90" font-size="13" fill="#1a1a1a" textLength="14.2" lengthAdjust="spacingAndGlyphs">SC</text>
<text x="151.70" y="496.90" font-size="8.2" fill="#1a1a1a" stroke="#1a1a1a" stroke-width="0.3" textLength="3.8" lengthAdjust="spacingAndGlyphs">7</text>
<text x="113.10" y="192.80" font-size="9.3" text-anchor="start" >T20e</text>
<text x="113.10" y="202.60" font-size="9.3" text-anchor="start" >/1</text>
<text x="157.50" y="192.80" font-size="9.3" text-anchor="start" >T20e</text>
<text x="157.50" y="202.60" font-size="9.3" text-anchor="start" >/14</text>
<text x="201.90" y="192.80" font-size="9.3" text-anchor="start" >T20e</text>
<text x="201.90" y="202.60" font-size="9.3" text-anchor="start" >/11</text>
<text x="335.10" y="192.80" font-size="9.3" text-anchor="start" >T20e</text>
<text x="335.10" y="202.60" font-size="9.3" text-anchor="start" >/9</text>
<text x="335.10" y="212.40" font-size="9.3" text-anchor="start" >can-l-out</text>
<text x="468.30" y="192.80" font-size="9.3" text-anchor="start" >T20e</text>
<text x="468.30" y="202.60" font-size="9.3" text-anchor="start" >/19</text>
<text x="468.30" y="212.40" font-size="9.3" text-anchor="start" >can-h-out</text>
<text x="335.10" y="458.60" font-size="9.3" text-anchor="start" >T16d</text>
<text x="335.10" y="468.30" font-size="9.3" text-anchor="start" >/14</text>
<text x="335.10" y="478.00" font-size="9.3" text-anchor="start" >can-l-out</text>
<text x="468.30" y="458.60" font-size="9.3" text-anchor="start" >T16d</text>
<text x="468.30" y="468.30" font-size="9.3" text-anchor="start" >/6</text>
<text x="468.30" y="478.00" font-size="9.3" text-anchor="start" >can-h-out</text>
<text x="246.30" y="525.60" font-size="9.3" text-anchor="start" >T16d</text>
<text x="246.30" y="535.20" font-size="9.3" text-anchor="start" >/4</text>
<text x="290.70" y="525.60" font-size="9.3" text-anchor="start" >T16d</text>
<text x="290.70" y="535.20" font-size="9.3" text-anchor="start" >/5</text>
<text x="335.10" y="525.60" font-size="9.3" text-anchor="start" >T16d</text>
<text x="335.10" y="535.20" font-size="9.3" text-anchor="start" >/7</text>
<text x="335.10" y="544.80" font-size="9.3" text-anchor="start" >k</text>
<text x="423.90" y="525.60" font-size="9.3" text-anchor="start" >T16d</text>
<text x="423.90" y="535.20" font-size="9.3" text-anchor="start" >/15</text>
<text x="468.30" y="525.60" font-size="9.3" text-anchor="start" >T16d</text>
<text x="468.30" y="535.20" font-size="9.3" text-anchor="start" >/15</text>
<text x="512.70" y="525.60" font-size="9.3" text-anchor="start" >T16d</text>
<text x="512.70" y="535.20" font-size="9.3" text-anchor="start" >/1</text>
<text x="601.50" y="525.60" font-size="9.3" text-anchor="start" >T16d</text>
<text x="601.50" y="535.20" font-size="9.3" text-anchor="start" >/16</text>
<text x="68.70" y="468.30" font-size="9.3" text-anchor="start" >T40</text>
<text x="68.70" y="477.60" font-size="9.3" text-anchor="start" >/24</text>
<text x="113.10" y="468.30" font-size="9.3" text-anchor="start" >T40</text>
<text x="113.10" y="477.60" font-size="9.3" text-anchor="start" >/24</text>
<text x="335.10" y="802.20" font-size="9.3" text-anchor="start" >T20m</text>
<text x="335.10" y="811.50" font-size="9.3" text-anchor="start" >/1</text>
<text x="379.50" y="802.20" font-size="9.3" text-anchor="start" >T25</text>
<text x="379.50" y="811.50" font-size="9.3" text-anchor="start" >/11</text>
<text x="423.90" y="802.20" font-size="9.3" text-anchor="start" >T100</text>
<text x="423.90" y="811.50" font-size="9.3" text-anchor="start" >/53</text>
<text x="468.30" y="802.20" font-size="9.3" text-anchor="start" >T100a</text>
<text x="468.30" y="811.50" font-size="9.3" text-anchor="start" >/53</text>
<text x="62.60" y="295.00" font-size="9.3" text-anchor="middle" >0.5</text>
<text x="62.60" y="306.60" font-size="9.3" text-anchor="middle" >rt/ws</text>
<text x="107.00" y="295.00" font-size="9.3" text-anchor="middle" >0.5</text>
<text x="107.00" y="306.60" font-size="9.3" text-anchor="middle" >rt/ws</text>
<text x="151.40" y="295.00" font-size="9.3" text-anchor="middle" >0.5</text>
<text x="151.40" y="306.60" font-size="9.3" text-anchor="middle" >sw/vi</text>
<text x="195.80" y="295.00" font-size="9.3" text-anchor="middle" >0.5</text>
<text x="195.80" y="306.60" font-size="9.3" text-anchor="middle" >br</text>
<text x="329.00" y="295.00" font-size="9.3" text-anchor="middle" >0.35</text>
<text x="329.00" y="306.60" font-size="9.3" text-anchor="middle" >or/br</text>
<text x="462.20" y="295.00" font-size="9.3" text-anchor="middle" >0.35</text>
<text x="462.20" y="306.60" font-size="9.3" text-anchor="middle" >or/sw</text>
<text x="80.00" y="301.60" font-size="9.3" text-anchor="start" >*4</text>
<text x="124.40" y="301.60" font-size="9.3" text-anchor="start" >*5</text>
<text x="240.20" y="606.20" font-size="9.3" text-anchor="middle" >0.5</text>
<text x="240.20" y="618.00" font-size="9.3" text-anchor="middle" >br</text>
<text x="284.60" y="606.20" font-size="9.3" text-anchor="middle" >0.5</text>
<text x="284.60" y="618.00" font-size="9.3" text-anchor="middle" >br</text>
<text x="329.00" y="606.20" font-size="9.3" text-anchor="middle" >0.35</text>
<text x="329.00" y="618.00" font-size="9.3" text-anchor="middle" >gr/ws</text>
<text x="417.80" y="606.20" font-size="9.3" text-anchor="middle" >0.35</text>
<text x="417.80" y="618.00" font-size="9.3" text-anchor="middle" >bl/gr</text>
<text x="462.20" y="606.20" font-size="9.3" text-anchor="middle" >0.35</text>
<text x="462.20" y="618.00" font-size="9.3" text-anchor="middle" >bl/gr</text>
<text x="506.60" y="606.20" font-size="9.3" text-anchor="middle" >0.5</text>
<text x="506.60" y="618.00" font-size="9.3" text-anchor="middle" >bl/sw</text>
<text x="595.40" y="606.20" font-size="9.3" text-anchor="middle" >0.5</text>
<text x="595.40" y="618.00" font-size="9.3" text-anchor="middle" >rt/sw</text>
<text x="195.80" y="761.00" font-size="9.3" text-anchor="middle" >1.5</text>
<text x="195.80" y="773.00" font-size="9.3" text-anchor="middle" >br</text>
<text x="329.00" y="761.00" font-size="9.3" text-anchor="middle" >0.35</text>
<text x="329.00" y="773.00" font-size="9.3" text-anchor="middle" >gr/ws</text>
<text x="373.40" y="761.00" font-size="9.3" text-anchor="middle" >0.35</text>
<text x="373.40" y="773.00" font-size="9.3" text-anchor="middle" >gr/ws</text>
<text x="506.60" y="761.00" font-size="9.3" text-anchor="middle" >1.0</text>
<text x="506.60" y="773.00" font-size="9.3" text-anchor="middle" >bl/sw</text>
<text x="595.40" y="761.00" font-size="9.3" text-anchor="middle" >1.0</text>
<text x="595.40" y="773.00" font-size="9.3" text-anchor="middle" >rt/sw</text>
<path d="M329.00 820.4v2" stroke="#000" stroke-width="1"/>
<path d="M373.40 820.4v2" stroke="#000" stroke-width="1"/>
<path d="M417.80 820.4v2" stroke="#000" stroke-width="1"/>
<path d="M462.20 820.4v2" stroke="#000" stroke-width="1"/>
<text x="498.60" y="827.30" font-size="9.3" text-anchor="middle" >86</text>
<text x="587.40" y="827.30" font-size="9.3" text-anchor="middle" >86</text>
<text x="706.60" y="682.00" font-size="11" text-anchor="start" letter-spacing="0.9">ws</text>
<text x="740.60" y="682.00" font-size="11" text-anchor="start" >=</text>
<text x="755.00" y="682.00" font-size="11" text-anchor="start" >белый</text>
<text x="706.60" y="696.00" font-size="11" text-anchor="start" letter-spacing="0.9">sw</text>
<text x="740.60" y="696.00" font-size="11" text-anchor="start" >=</text>
<text x="755.00" y="696.00" font-size="11" text-anchor="start" >чёрный</text>
<text x="706.60" y="710.00" font-size="11" text-anchor="start" letter-spacing="0.9">ro</text>
<text x="740.60" y="710.00" font-size="11" text-anchor="start" >=</text>
<text x="755.00" y="710.00" font-size="11" text-anchor="start" >красный</text>
<text x="706.60" y="724.00" font-size="11" text-anchor="start" letter-spacing="0.9">rt</text>
<text x="740.60" y="724.00" font-size="11" text-anchor="start" >=</text>
<text x="755.00" y="724.00" font-size="11" text-anchor="start" >красный</text>
<text x="706.60" y="738.00" font-size="11" text-anchor="start" letter-spacing="0.9">br</text>
<text x="740.60" y="738.00" font-size="11" text-anchor="start" >=</text>
<text x="755.00" y="738.00" font-size="11" text-anchor="start" >коричневый</text>
<text x="706.60" y="752.00" font-size="11" text-anchor="start" letter-spacing="0.9">gn</text>
<text x="740.60" y="752.00" font-size="11" text-anchor="start" >=</text>
<text x="755.00" y="752.00" font-size="11" text-anchor="start" >зелёный</text>
<text x="706.60" y="766.00" font-size="11" text-anchor="start" letter-spacing="0.9">bl</text>
<text x="740.60" y="766.00" font-size="11" text-anchor="start" >=</text>
<text x="755.00" y="766.00" font-size="11" text-anchor="start" >синий</text>
<text x="706.60" y="780.00" font-size="11" text-anchor="start" letter-spacing="0.9">gr</text>
<text x="740.60" y="780.00" font-size="11" text-anchor="start" >=</text>
<text x="755.00" y="780.00" font-size="11" text-anchor="start" >серый</text>
<text x="706.60" y="794.00" font-size="11" text-anchor="start" letter-spacing="0.9">li</text>
<text x="740.60" y="794.00" font-size="11" text-anchor="start" >=</text>
<text x="755.00" y="794.00" font-size="11" text-anchor="start" >лиловый</text>
<text x="706.60" y="808.00" font-size="11" text-anchor="start" letter-spacing="0.9">vi</text>
<text x="740.60" y="808.00" font-size="11" text-anchor="start" >=</text>
<text x="755.00" y="808.00" font-size="11" text-anchor="start" >лиловый</text>
<text x="706.60" y="822.00" font-size="11" text-anchor="start" letter-spacing="0.9">ge</text>
<text x="740.60" y="822.00" font-size="11" text-anchor="start" >=</text>
<text x="755.00" y="822.00" font-size="11" text-anchor="start" >жёлтый</text>
<g transform="translate(731.4 367.6) rotate(0)"><path d="M-9.6 3.2L0 -6.4L9.6 3.2L6.4 6.2L0 -0.2L-6.4 6.2z" fill="#b4b6d4" stroke="#5a5c78" stroke-width="0.9"/><path d="M-8.6 3.2L0 -5.2" stroke="#e6e7f4" stroke-width="1"/></g>
<g transform="translate(731.4 425.4) rotate(180)"><path d="M-9.6 3.2L0 -6.4L9.6 3.2L6.4 6.2L0 -0.2L-6.4 6.2z" fill="#b4b6d4" stroke="#5a5c78" stroke-width="0.9"/><path d="M-8.6 3.2L0 -5.2" stroke="#e6e7f4" stroke-width="1"/></g>
<g transform="translate(706.0 396.6) rotate(270)"><path d="M-9.6 3.2L0 -6.4L9.6 3.2L6.4 6.2L0 -0.2L-6.4 6.2z" fill="#b4b6d4" stroke="#5a5c78" stroke-width="0.9"/><path d="M-8.6 3.2L0 -5.2" stroke="#e6e7f4" stroke-width="1"/></g>
<g transform="translate(757.0 396.6) rotate(90)"><path d="M-9.6 3.2L0 -6.4L9.6 3.2L6.4 6.2L0 -0.2L-6.4 6.2z" fill="#b4b6d4" stroke="#5a5c78" stroke-width="0.9"/><path d="M-8.6 3.2L0 -5.2" stroke="#e6e7f4" stroke-width="1"/></g>
<g transform="translate(721.4 465.8)">
<path d="M12.2 11.8L18.6 18.2" stroke="#7a5a3a" stroke-width="3.2" stroke-linecap="round"/><path d="M12.4 11.6L18.4 17.6" stroke="#d9a066" stroke-width="1.5" stroke-linecap="round"/>
<circle cx="7.4" cy="7.4" r="6.3" fill="#c6c8e2" stroke="#555a70" stroke-width="1.1"/>
</g>
<g transform="translate(721.4 494.8)">
<path d="M12.2 11.8L18.6 18.2" stroke="#7a5a3a" stroke-width="3.2" stroke-linecap="round"/><path d="M12.4 11.6L18.4 17.6" stroke="#d9a066" stroke-width="1.5" stroke-linecap="round"/>
<circle cx="7.4" cy="7.4" r="6.3" fill="#c6c8e2" stroke="#555a70" stroke-width="1.1"/>
<path d="M4 7.4h6.8M7.4 4v6.8" stroke="#000" stroke-width="1.2"/>
</g>
<g transform="translate(721.4 523.8)">
<path d="M12.2 11.8L18.6 18.2" stroke="#7a5a3a" stroke-width="3.2" stroke-linecap="round"/><path d="M12.4 11.6L18.4 17.6" stroke="#d9a066" stroke-width="1.5" stroke-linecap="round"/>
<circle cx="7.4" cy="7.4" r="6.3" fill="#c6c8e2" stroke="#555a70" stroke-width="1.1"/>
<path d="M4 7.4h6.8" stroke="#000" stroke-width="1.2"/>
</g>
</svg>
<!-- ===== right legend panel ===== -->
<div class="a" id="rp" style="left:845px;top:108px;width:738px;height:714px;overflow:hidden;font-size:13px;">
<div class="t" style="left:5.0px;top:-6.90px;font-size:13.35px;font-weight:bold;">Диагностический интерфейс шин данных, Диагностический разъём</div>
<div class="t" style="left:5.6px;top:8.60px;font-size:13px;letter-spacing:-0.4px;">J234</div>
<div class="t" style="left:54.0px;top:10.60px;font-size:13px;">-</div>
<div class="t" style="left:68.4px;top:10.60px;font-size:13px;letter-spacing:-0.05px;">Блок управления подушек безопасности</div>
<svg class="a" style="left:317.8px;top:6.8px;" width="18" height="15" viewBox="0 0 18 15"><path d="M6.6 3.2L7.6 0.5h4.6l1 2.7H16.6a1 1 0 0 1 1 1v9.2a1 1 0 0 1-1 1H1.4a1 1 0 0 1-1-1V4.2a1 1 0 0 1 1-1z" fill="#8c8c8c" stroke="#707070" stroke-width="1"/><circle cx="8.9" cy="8.7" r="3.9" fill="#8a8a8a" stroke="#f2f2f2" stroke-width="0.9"/><rect x="2" y="5" width="1.6" height="1.5" fill="#e8e8e8"/></svg>
<div class="t" style="left:5.6px;top:28.60px;font-size:13px;letter-spacing:-0.4px;">J533</div>
<div class="t" style="left:54.0px;top:30.60px;font-size:13px;">-</div>
<div class="t" style="left:68.4px;top:30.60px;font-size:13px;letter-spacing:-0.05px;">Диагностический интерфейс шин данных</div>
<svg class="a" style="left:320.0px;top:26.8px;" width="18" height="15" viewBox="0 0 18 15"><path d="M6.6 3.2L7.6 0.5h4.6l1 2.7H16.6a1 1 0 0 1 1 1v9.2a1 1 0 0 1-1 1H1.4a1 1 0 0 1-1-1V4.2a1 1 0 0 1 1-1z" fill="#8c8c8c" stroke="#707070" stroke-width="1"/><circle cx="8.9" cy="8.7" r="3.9" fill="#8a8a8a" stroke="#f2f2f2" stroke-width="0.9"/><rect x="2" y="5" width="1.6" height="1.5" fill="#e8e8e8"/></svg>
<div class="t" style="left:5.6px;top:48.60px;font-size:13px;letter-spacing:-0.4px;">J743</div>
<div class="t" style="left:54.0px;top:48.60px;font-size:13px;">-</div>
<div class="t" style="left:68.4px;top:48.60px;font-size:13px;letter-spacing:-0.05px;">Блок Mechatronik КП DSG</div>
<div class="t" style="left:5.6px;top:66.60px;font-size:13px;letter-spacing:-0.4px;">SC4</div>
<div class="t" style="left:54.0px;top:68.60px;font-size:13px;">-</div>
<div class="t" style="left:68.4px;top:68.60px;font-size:13px;letter-spacing:-0.05px;">Предохранитель 4 в блоке предохранителей C</div>
<svg class="a" style="left:353.1px;top:64.8px;" width="18" height="15" viewBox="0 0 18 15"><path d="M6.6 3.2L7.6 0.5h4.6l1 2.7H16.6a1 1 0 0 1 1 1v9.2a1 1 0 0 1-1 1H1.4a1 1 0 0 1-1-1V4.2a1 1 0 0 1 1-1z" fill="#8c8c8c" stroke="#707070" stroke-width="1"/><circle cx="8.9" cy="8.7" r="3.9" fill="#8a8a8a" stroke="#f2f2f2" stroke-width="0.9"/><rect x="2" y="5" width="1.6" height="1.5" fill="#e8e8e8"/></svg>
<div class="t" style="left:5.6px;top:86.60px;font-size:13px;letter-spacing:-0.4px;">SC7</div>
<div class="t" style="left:54.0px;top:88.60px;font-size:13px;">-</div>
<div class="t" style="left:68.4px;top:88.60px;font-size:13px;letter-spacing:-0.05px;">Предохранитель 7 в блоке предохранителей C</div>
<svg class="a" style="left:353.1px;top:84.8px;" width="18" height="15" viewBox="0 0 18 15"><path d="M6.6 3.2L7.6 0.5h4.6l1 2.7H16.6a1 1 0 0 1 1 1v9.2a1 1 0 0 1-1 1H1.4a1 1 0 0 1-1-1V4.2a1 1 0 0 1 1-1z" fill="#8c8c8c" stroke="#707070" stroke-width="1"/><circle cx="8.9" cy="8.7" r="3.9" fill="#8a8a8a" stroke="#f2f2f2" stroke-width="0.9"/><rect x="2" y="5" width="1.6" height="1.5" fill="#e8e8e8"/></svg>
<div class="t" style="left:5.6px;top:106.60px;font-size:13px;letter-spacing:-0.4px;">SC13</div>
<div class="t" style="left:54.0px;top:108.60px;font-size:13px;">-</div>
<div class="t" style="left:68.4px;top:108.60px;font-size:13px;letter-spacing:-0.05px;">Предохранитель 13 в блоке предохранителей C</div>
<svg class="a" style="left:360.0px;top:104.8px;" width="18" height="15" viewBox="0 0 18 15"><path d="M6.6 3.2L7.6 0.5h4.6l1 2.7H16.6a1 1 0 0 1 1 1v9.2a1 1 0 0 1-1 1H1.4a1 1 0 0 1-1-1V4.2a1 1 0 0 1 1-1z" fill="#8c8c8c" stroke="#707070" stroke-width="1"/><circle cx="8.9" cy="8.7" r="3.9" fill="#8a8a8a" stroke="#f2f2f2" stroke-width="0.9"/><rect x="2" y="5" width="1.6" height="1.5" fill="#e8e8e8"/></svg>
<div class="t" style="left:5.6px;top:126.60px;font-size:13px;letter-spacing:-0.4px;">SB15</div>
<div class="t" style="left:54.0px;top:128.60px;font-size:13px;">-</div>
<div class="t" style="left:68.4px;top:128.60px;font-size:13px;letter-spacing:-0.05px;">Предохранитель 15 в блоке предохранителей B</div>
<svg class="a" style="left:360.0px;top:124.8px;" width="18" height="15" viewBox="0 0 18 15"><path d="M6.6 3.2L7.6 0.5h4.6l1 2.7H16.6a1 1 0 0 1 1 1v9.2a1 1 0 0 1-1 1H1.4a1 1 0 0 1-1-1V4.2a1 1 0 0 1 1-1z" fill="#8c8c8c" stroke="#707070" stroke-width="1"/><circle cx="8.9" cy="8.7" r="3.9" fill="#8a8a8a" stroke="#f2f2f2" stroke-width="0.9"/><rect x="2" y="5" width="1.6" height="1.5" fill="#e8e8e8"/></svg>
<div class="t" style="left:5.6px;top:146.60px;font-size:13px;letter-spacing:-0.4px;">SB24</div>
<div class="t" style="left:54.0px;top:148.60px;font-size:13px;">-</div>
<div class="t" style="left:68.4px;top:148.60px;font-size:13px;letter-spacing:-0.05px;">Предохранитель 24 в блоке предохранителей B</div>
<svg class="a" style="left:360.0px;top:144.8px;" width="18" height="15" viewBox="0 0 18 15"><path d="M6.6 3.2L7.6 0.5h4.6l1 2.7H16.6a1 1 0 0 1 1 1v9.2a1 1 0 0 1-1 1H1.4a1 1 0 0 1-1-1V4.2a1 1 0 0 1 1-1z" fill="#8c8c8c" stroke="#707070" stroke-width="1"/><circle cx="8.9" cy="8.7" r="3.9" fill="#8a8a8a" stroke="#f2f2f2" stroke-width="0.9"/><rect x="2" y="5" width="1.6" height="1.5" fill="#e8e8e8"/></svg>
<div class="t" style="left:5.6px;top:166.60px;font-size:13px;letter-spacing:-0.4px;">T16d</div>
<div class="t" style="left:54.0px;top:166.60px;font-size:13px;">-</div>
<div class="t" style="left:68.4px;top:166.60px;font-size:13px;letter-spacing:-0.05px;">Разъём, 16-контактный</div>
<div class="t" style="left:5.6px;top:184.60px;font-size:13px;letter-spacing:-0.4px;">T20e</div>
<div class="t" style="left:54.0px;top:184.60px;font-size:13px;">-</div>
<div class="t" style="left:68.4px;top:184.60px;font-size:13px;letter-spacing:-0.05px;">Разъём, 20-контактный</div>
<div class="t" style="left:5.6px;top:202.60px;font-size:13px;letter-spacing:-0.4px;">T20m</div>
<div class="t" style="left:54.0px;top:202.60px;font-size:13px;">-</div>
<div class="t" style="left:68.4px;top:202.60px;font-size:13px;letter-spacing:-0.05px;">Разъём, 20-контактный</div>
<div class="t" style="left:5.6px;top:220.60px;font-size:13px;letter-spacing:-0.4px;">T25</div>
<div class="t" style="left:54.0px;top:220.60px;font-size:13px;">-</div>
<div class="t" style="left:68.4px;top:220.60px;font-size:13px;letter-spacing:-0.05px;">Разъем, 25-контактный</div>
<div class="t" style="left:5.6px;top:238.60px;font-size:13px;letter-spacing:-0.4px;">T40</div>
<div class="t" style="left:54.0px;top:238.60px;font-size:13px;">-</div>
<div class="t" style="left:68.4px;top:238.60px;font-size:13px;letter-spacing:-0.05px;">Разъём, 40-контактный</div>
<div class="t" style="left:5.6px;top:256.60px;font-size:13px;letter-spacing:-0.4px;">T100</div>
<div class="t" style="left:54.0px;top:256.60px;font-size:13px;">-</div>
<div class="t" style="left:68.4px;top:256.60px;font-size:13px;letter-spacing:-0.05px;">Разъём, 100-контактный</div>
<div class="t" style="left:5.6px;top:274.60px;font-size:13px;letter-spacing:-0.4px;">T100a</div>
<div class="t" style="left:54.0px;top:274.60px;font-size:13px;">-</div>
<div class="t" style="left:68.4px;top:274.60px;font-size:13px;letter-spacing:-0.05px;">Разъём, 100-контактный</div>
<div class="t" style="left:5.6px;top:292.60px;font-size:13px;letter-spacing:-0.4px;">U31</div>
<div class="t" style="left:54.0px;top:292.60px;font-size:13px;">-</div>
<div class="t" style="left:68.4px;top:292.60px;font-size:13px;letter-spacing:-0.05px;">Диагностический разъём</div>
<svg class="a" style="left:4.0px;top:307.6px;" width="36" height="24.4" viewBox="0 0 36 24.4"><circle cx="17.1" cy="16.9" r="15.1" fill="none" stroke="#000" stroke-width="1.6"/><text x="8.5" y="21.4" font-family="Liberation Sans,sans-serif" font-size="10">400</text></svg>
<div class="t" style="left:54.0px;top:310.60px;font-size:13px;">-</div>
<div class="t" style="left:68.4px;top:310.60px;font-size:13px;letter-spacing:-0.04px;">Соединение с массой 35 в главном жгуте проводов</div>
<svg class="a" style="left:4.0px;top:332.1px;" width="36" height="24.4" viewBox="0 0 36 24.4"><circle cx="17.1" cy="16.9" r="15.1" fill="none" stroke="#000" stroke-width="1.6"/><text x="8.5" y="21.4" font-family="Liberation Sans,sans-serif" font-size="10">639</text></svg>
<div class="t" style="left:54.0px;top:335.10px;font-size:13px;">-</div>
<div class="t" style="left:68.4px;top:335.10px;font-size:13px;letter-spacing:-0.04px;">Точка соединения с массой на левой стойке A</div>
<svg class="a" style="left:4.0px;top:356.6px;" width="36" height="24.4" viewBox="0 0 36 24.4"><circle cx="17.1" cy="16.9" r="15.1" fill="none" stroke="#000" stroke-width="1.6"/><text x="8.5" y="21.4" font-family="Liberation Sans,sans-serif" font-size="10">B277</text></svg>
<div class="t" style="left:54.0px;top:359.60px;font-size:13px;">-</div>
<div class="t" style="left:68.4px;top:359.60px;font-size:13px;letter-spacing:-0.04px;">Плюсовое соединение 1 (15a) в главном жгуте проводов</div>
<svg class="a" style="left:4.0px;top:381.1px;" width="36" height="24.4" viewBox="0 0 36 24.4"><circle cx="17.1" cy="16.9" r="15.1" fill="none" stroke="#000" stroke-width="1.6"/><text x="8.5" y="21.4" font-family="Liberation Sans,sans-serif" font-size="10">B331</text></svg>
<div class="t" style="left:54.0px;top:384.10px;font-size:13px;">-</div>
<div class="t" style="left:68.4px;top:384.10px;font-size:13px;letter-spacing:-0.04px;">Плюсовое соединение 17 (30a) в главном жгуте проводов</div>
<svg class="a" style="left:4.0px;top:405.6px;" width="36" height="24.4" viewBox="0 0 36 24.4"><circle cx="17.1" cy="16.9" r="15.1" fill="none" stroke="#000" stroke-width="1.6"/><text x="8.5" y="21.4" font-family="Liberation Sans,sans-serif" font-size="10">B444</text></svg>
<div class="t" style="left:54.0px;top:408.60px;font-size:13px;">-</div>
<div class="t" style="left:68.4px;top:408.60px;font-size:13px;letter-spacing:-0.04px;">Соединение 1 (диагностика) в главном жгуте проводов</div>
<div class="t" style="left:6.3px;top:433.20px;font-size:13px;">*</div>
<div class="t" style="left:54.0px;top:433.20px;font-size:13px;">-</div>
<div class="t" style="left:68.4px;top:433.20px;font-size:13px;">только для а/м с КП DSG 02E</div>
<div class="t" style="left:6.3px;top:451.20px;font-size:13px;">*2</div>
<div class="t" style="left:54.0px;top:451.20px;font-size:13px;">-</div>
<div class="t" style="left:68.4px;top:451.20px;font-size:13px;">только для а/м с КП DSG 0AM</div>
<div class="t" style="left:6.3px;top:469.20px;font-size:13px;">*3</div>
<div class="t" style="left:54.0px;top:469.20px;font-size:13px;">-</div>
<div class="t" style="left:68.4px;top:469.20px;font-size:13px;">только для а/м с задними боковыми подушками безопасности</div>
<div class="t" style="left:6.3px;top:487.20px;font-size:13px;">*4</div>
<div class="t" style="left:54.0px;top:487.20px;font-size:13px;">-</div>
<div class="t" style="left:68.4px;top:487.20px;font-size:13px;">Предохранители в коммутационном блоке Low</div>
<div class="t" style="left:6.3px;top:505.20px;font-size:13px;">*5</div>
<div class="t" style="left:54.0px;top:505.20px;font-size:13px;">-</div>
<div class="t" style="left:68.4px;top:505.20px;font-size:13px;">Предохранители в коммутационном блоке High</div>
</div>
<div class="a" style="left:1583px;top:108px;width:15px;height:714px;background:#f0f0f0;"></div>
<div class="a" style="left:1583px;top:140px;width:15px;height:59px;box-sizing:border-box;border:1px solid #979797;border-radius:2px;background:linear-gradient(to right,#f4f4f4 0,#e9e9e9 45%,#d2d2d2 55%,#c9c9c9 100%);"></div>
<svg class="a" style="left:1583px;top:108px;" width="15" height="714" viewBox="0 0 15 714"><path d="M4 11l3.5-4 3.5 4z" fill="#555"/><path d="M4 705l3.5 4 3.5-4z" fill="#555"/><path d="M4.5 58.5h7M4.5 61.5h7M4.5 64.5h7" stroke="#555" stroke-width="1"/><path d="M4.5 59.5h7M4.5 62.5h7M4.5 65.5h7" stroke="#fff" stroke-width="1"/></svg>
<!-- ===== tab bar ===== -->
<div class="a" style="left:0;top:822px;width:1600px;height:17px;background:#c8c8c8;"></div>
<div class="a" style="left:0;top:822px;width:2px;height:17px;background:#828282;"></div>
<div class="a" style="left:36px;top:822px;width:1564px;height:1px;background:#000;"></div>
<svg class="a" style="left:0;top:822px;" width="200" height="17" viewBox="0 0 200 17">
  <rect x="2" y="0" width="34" height="17" fill="#f0f0f0"/>
  <path d="M2.5 15.5v-15h14" stroke="#fff" fill="none"/><path d="M2.5 15.5h14v-15" stroke="#696969" fill="none"/><path d="M3.5 14.5h12v-13" stroke="#a0a0a0" fill="none"/>
  <path d="M18.5 15.5v-15h15" stroke="#fff" fill="none"/><path d="M18.5 15.5h15v-15" stroke="#696969" fill="none"/><path d="M19.5 14.5h13v-13" stroke="#a0a0a0" fill="none"/>
  <path d="M12 3.5v9l-6-4.5z" fill="#6d6d6d"/><path d="M24 3.5v9l6-4.5z" fill="#6d6d6d"/>
  <path d="M36 0.5L43 16h44l-1.5-15.5z" fill="#f0f0f0"/>
  <path d="M37 0.5L43.5 16h43" stroke="#000" stroke-width="1.1" fill="none"/>
  <path d="M88 0L94 16.5h88L189.5 0z" fill="#fff"/>
  <path d="M86 0.5L93.5 16h88.5L189 0.5" stroke="#000" stroke-width="1.2" fill="none"/>
  <path d="M87.5 9.5L85 16" stroke="#000" stroke-width="1.1" fill="none"/>
</svg>
<div class="t" id="tab1" style="left:48px;top:824px;font-size:12px;color:#222;">Обзор</div>
<div class="t" id="tab2" style="left:96px;top:824px;font-size:12px;font-weight:bold;letter-spacing:-0.08px;">Электросхема</div>
<!-- ===== status bar ===== -->
<div class="a" style="left:0;top:838px;width:1600px;height:22px;background:#d4d0c8;"></div>
<div class="a" style="left:0;top:838px;width:1600px;height:2px;background:#f3f3f1;"></div>
<div class="a" style="left:0;top:840px;width:1600px;height:1px;background:#e2dfd9;"></div>
<div class="t" id="ready" style="left:2px;top:846px;font-size:12px;color:#222;">Готово</div>
<div class="sp" style="left:834px;width:69px;letter-spacing:-0.1px;">9000000006</div>
<div class="sp" style="left:906px;width:143px;"></div>
<div class="sp" style="left:1051px;width:17px;padding-left:4px;">C</div>
<div class="sp" style="left:1070px;width:26px;letter-spacing:-0.3px;">365</div>
<div class="sp" style="left:1099px;width:81px;letter-spacing:-0.2px;">Passat Variant</div>
<div class="sp" style="left:1183px;width:33px;letter-spacing:-0.6px;">BWS</div>
<div class="sp" style="left:1218px;width:35px;"></div>
<div class="sp" style="left:1257px;width:34px;"></div>
<div class="sp" style="left:1293px;width:87px;"></div>
<div class="sp" style="left:1383px;width:57px;"></div>
<div class="sp" style="left:1442px;width:88px;"></div>
<div class="sp" style="left:1533px;width:34px;">MAX</div>
<div class="sp" style="left:1569px;width:31px;border-right:none;"></div>
</body></html>
